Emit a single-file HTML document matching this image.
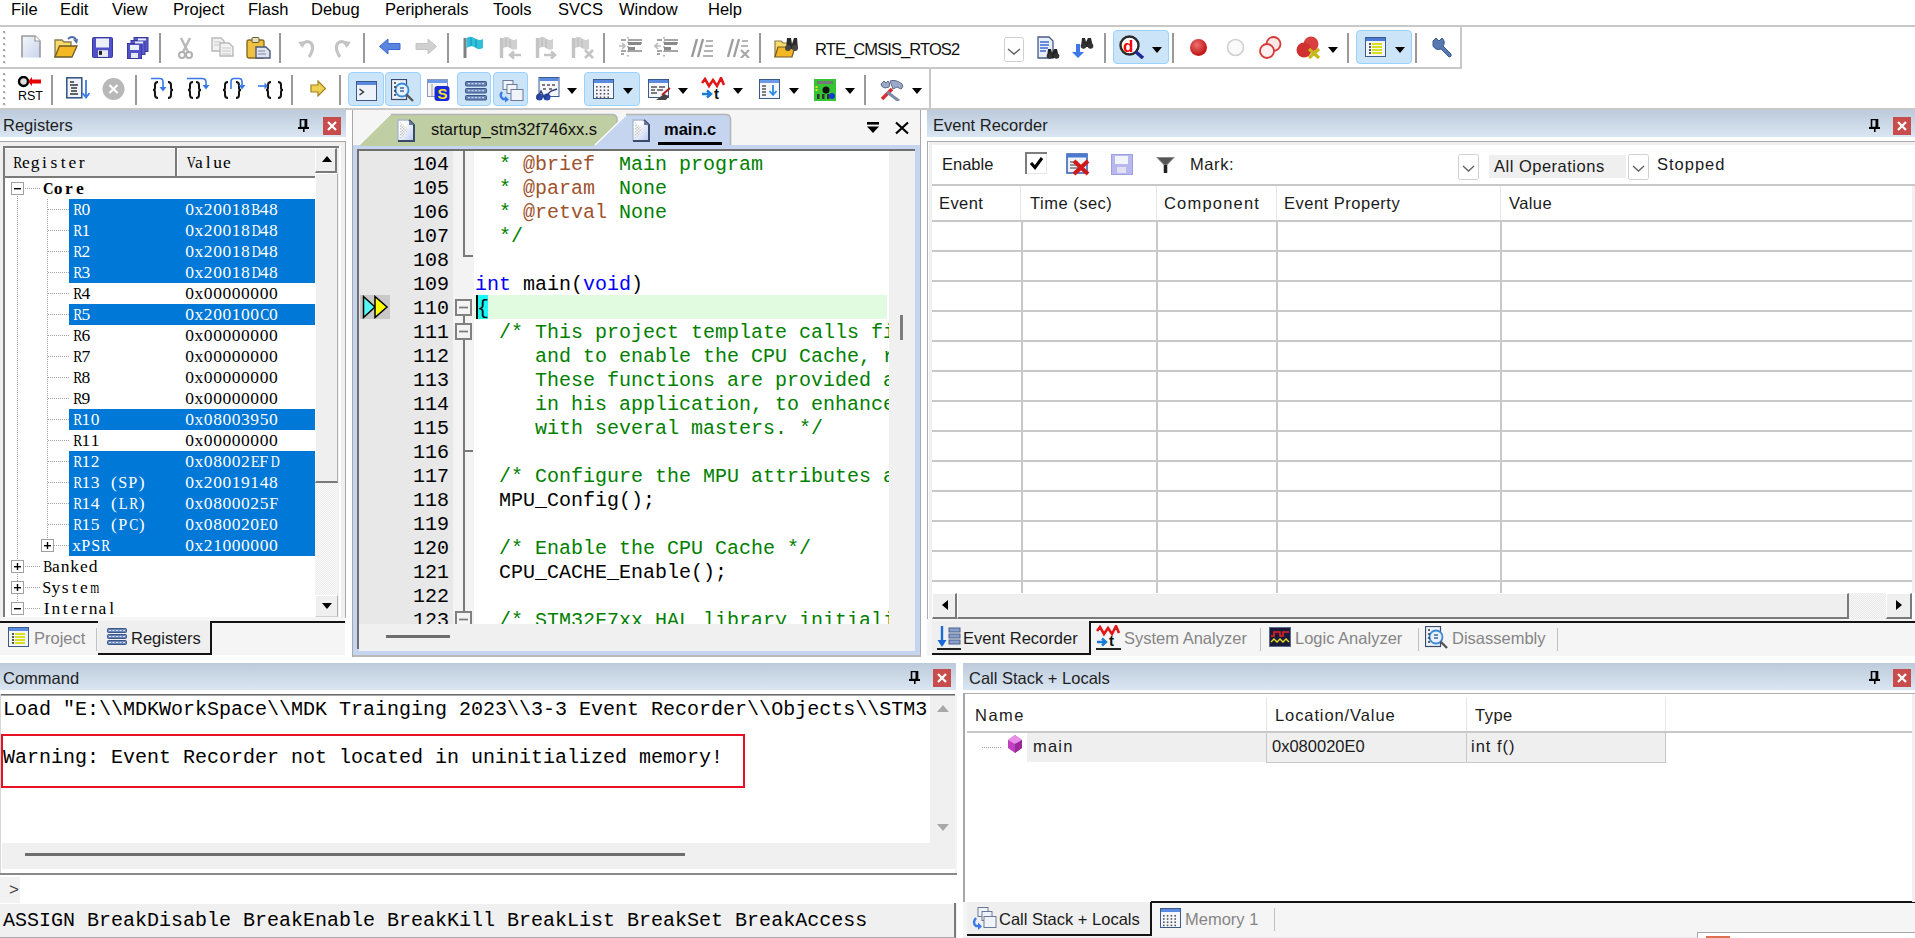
<!DOCTYPE html><html><head><meta charset="utf-8"><style>
*{box-sizing:border-box;margin:0;padding:0}
html,body{width:1915px;height:938px;overflow:hidden;background:#fff;position:relative;font-family:"Liberation Sans",sans-serif;font-size:16px;color:#000}
.a{position:absolute}
.t{position:absolute;white-space:pre;line-height:1}
.m{font-family:"Liberation Mono",monospace}
.hdr{position:absolute;background:linear-gradient(#bccadb,#dae6f2)}
.hdr .t{top:7px;left:3px;font-size:16.5px;color:#1e1e1e}
.cls{position:absolute;width:18px;height:18px;background:#c94c4c}
.cls:before,.cls:after{content:"";position:absolute;left:4px;top:8px;width:10px;height:2.5px;background:#fff;transform:rotate(45deg)}
.cls:after{transform:rotate(-45deg)}
.pin{position:absolute;width:12px;height:16px}
.i{position:absolute;overflow:hidden}
</style></head><body>
<div class="t" style="left:11px;top:1px;font-size:16.5px;color:#000;">File</div>
<div class="t" style="left:60px;top:1px;font-size:16.5px;color:#000;">Edit</div>
<div class="t" style="left:112px;top:1px;font-size:16.5px;color:#000;">View</div>
<div class="t" style="left:173px;top:1px;font-size:16.5px;color:#000;">Project</div>
<div class="t" style="left:248px;top:1px;font-size:16.5px;color:#000;">Flash</div>
<div class="t" style="left:311px;top:1px;font-size:16.5px;color:#000;">Debug</div>
<div class="t" style="left:385px;top:1px;font-size:16.5px;color:#000;">Peripherals</div>
<div class="t" style="left:493px;top:1px;font-size:16.5px;color:#000;">Tools</div>
<div class="t" style="left:558px;top:1px;font-size:16.5px;color:#000;">SVCS</div>
<div class="t" style="left:619px;top:1px;font-size:16.5px;color:#000;">Window</div>
<div class="t" style="left:708px;top:1px;font-size:16.5px;color:#000;">Help</div>
<div class="a" style="left:0px;top:25px;width:1915px;height:2px;background:#c8c8c8;"></div>
<div class="a" style="left:1460px;top:25px;width:2px;height:43px;background:#c8c8c8;"></div>
<div class="a" style="left:0px;top:67px;width:1462px;height:2px;background:#c8c8c8;"></div>
<div class="a" style="left:929px;top:67px;width:2px;height:43px;background:#c8c8c8;"></div>
<div class="a" style="left:0px;top:108px;width:1915px;height:2px;background:#c8c8c8;"></div>
<svg class="i" style="left:3px;top:31px" width="4" height="36" viewBox="0 0 4 36"><rect x="1" y="1" width="2" height="2" fill="#e8e8e8"/><rect x="0" y="0" width="2" height="2" fill="#a8a8a8"/><rect x="1" y="7" width="2" height="2" fill="#e8e8e8"/><rect x="0" y="6" width="2" height="2" fill="#a8a8a8"/><rect x="1" y="13" width="2" height="2" fill="#e8e8e8"/><rect x="0" y="12" width="2" height="2" fill="#a8a8a8"/><rect x="1" y="19" width="2" height="2" fill="#e8e8e8"/><rect x="0" y="18" width="2" height="2" fill="#a8a8a8"/><rect x="1" y="25" width="2" height="2" fill="#e8e8e8"/><rect x="0" y="24" width="2" height="2" fill="#a8a8a8"/><rect x="1" y="31" width="2" height="2" fill="#e8e8e8"/><rect x="0" y="30" width="2" height="2" fill="#a8a8a8"/></svg>
<svg class="i" style="left:3px;top:73px" width="4" height="36" viewBox="0 0 4 36"><rect x="1" y="1" width="2" height="2" fill="#e8e8e8"/><rect x="0" y="0" width="2" height="2" fill="#a8a8a8"/><rect x="1" y="7" width="2" height="2" fill="#e8e8e8"/><rect x="0" y="6" width="2" height="2" fill="#a8a8a8"/><rect x="1" y="13" width="2" height="2" fill="#e8e8e8"/><rect x="0" y="12" width="2" height="2" fill="#a8a8a8"/><rect x="1" y="19" width="2" height="2" fill="#e8e8e8"/><rect x="0" y="18" width="2" height="2" fill="#a8a8a8"/><rect x="1" y="25" width="2" height="2" fill="#e8e8e8"/><rect x="0" y="24" width="2" height="2" fill="#a8a8a8"/><rect x="1" y="31" width="2" height="2" fill="#e8e8e8"/><rect x="0" y="30" width="2" height="2" fill="#a8a8a8"/></svg>
<svg class="i" style="left:21px;top:35px" width="20" height="23" viewBox="0 0 20 23"><defs><linearGradient id="gd" x1="0" y1="0" x2="1" y2="1"><stop offset="0" stop-color="#f4f6fc"/><stop offset="1" stop-color="#c8d4ec"/></linearGradient></defs><path d="M1 22.5 L1 1 L14 1 L19 6 L19 22.5" fill="url(#gd)" stroke="#9a9a9a" stroke-width="1.6"/><path d="M14 1 L14 6 L19 6" fill="#fff" stroke="#9a9a9a" stroke-width="1.2"/></svg>
<svg class="i" style="left:54px;top:36px" width="25" height="22" viewBox="0 0 25 22"><path d="M1 21 L1 4 L8 4 L10 6 L17 6 L17 10" fill="#f7dc6a" stroke="#8a7a50" stroke-width="1.3"/><path d="M1 21 L5.5 10 L23 10 L18 21 Z" fill="#f4b824" stroke="#6e5a2a" stroke-width="1.3"/><path d="M14 3 Q18 -1 22 3" fill="none" stroke="#4a6aa8" stroke-width="1.8"/><path d="M19 3.5 L24 3 L23 8 Z" fill="#4a6aa8"/></svg>
<svg class="i" style="left:92px;top:37px" width="21" height="21" viewBox="0 0 21 21"><rect x="0.5" y="0.5" width="20" height="20" rx="1" fill="#5252c8" stroke="#3a3a9a"/><rect x="4" y="1.5" width="13" height="9.0" fill="#eef0f8"/><rect x="6" y="13.2" width="10" height="6.7" fill="#e8e8f0"/><rect x="7" y="13.9" width="3" height="4" fill="#222"/></svg>
<svg class="i" style="left:127px;top:37px" width="22" height="22" viewBox="0 0 22 22"><rect x="7" y="0.5" width="14" height="14" fill="#5a5ad0" stroke="#3a3a9a"/><rect x="4" y="3.5" width="14" height="14" fill="#5a5ad0" stroke="#3a3a9a"/><rect x="0.5" y="6.5" width="14" height="15" fill="#5252c8" stroke="#3a3a9a"/><rect x="3" y="8" width="9" height="5" fill="#eef0f8"/><rect x="4" y="16" width="7" height="5" fill="#e8e8f0"/><rect x="11" y="1.5" width="8" height="2" fill="#eef0f8"/><rect x="8" y="4.5" width="8" height="2" fill="#eef0f8"/></svg>
<div class="a" style="left:159px;top:33px;width:2px;height:30px;background:#9a9a9a;"></div>
<svg class="i" style="left:178px;top:37px" width="15" height="22" viewBox="0 0 15 22"><path d="M3 1 L10 15 M12 1 L5 15" stroke="#b8b8b8" stroke-width="2.4"/><circle cx="4" cy="18" r="3" fill="none" stroke="#b0b0b0" stroke-width="2"/><circle cx="11" cy="18" r="3" fill="none" stroke="#b0b0b0" stroke-width="2"/></svg>
<svg class="i" style="left:211px;top:37px" width="23" height="20" viewBox="0 0 23 20"><path d="M1 1 L10 1 L13 4 L13 14 L1 14 Z" fill="#f2f2f2" stroke="#b8b8b8" stroke-width="1.4"/><path d="M9 6 L18 6 L22 10 L22 19 L9 19 Z" fill="#f2f2f2" stroke="#b8b8b8" stroke-width="1.4"/><path d="M3 5h7M3 8h7M11 11h9M11 14h9M11 17h9" stroke="#c8c8c8" stroke-width="1"/></svg>
<svg class="i" style="left:246px;top:37px" width="25" height="22" viewBox="0 0 25 22"><rect x="1" y="3" width="17" height="18" rx="2" fill="#f0c040" stroke="#8a6a20" stroke-width="1.4"/><rect x="6" y="0.5" width="7" height="5" rx="1" fill="#e8e0c0" stroke="#6a5a30"/><path d="M10 10 L20 10 L24 14 L24 21 L10 21 Z" fill="#dfe4f0" stroke="#4a5a7a" stroke-width="1.4"/><path d="M12 14h7M12 17h8" stroke="#7a8aa8" stroke-width="1.2"/></svg>
<div class="a" style="left:279px;top:33px;width:2px;height:30px;background:#9a9a9a;"></div>
<svg class="i" style="left:297px;top:37px" width="19" height="22" viewBox="0 0 19 22"><path d="M4 9 Q9 2 14 6 Q18 11 12 20" fill="none" stroke="#c4c4c4" stroke-width="3.2"/><path d="M1 5 L8 4 L6 11 Z" fill="#c4c4c4"/></svg>
<svg class="i" style="left:333px;top:37px" width="19" height="22" viewBox="0 0 19 22"><path d="M15 9 Q10 2 5 6 Q1 11 7 20" fill="none" stroke="#c4c4c4" stroke-width="3.2"/><path d="M18 5 L11 4 L13 11 Z" fill="#c4c4c4"/></svg>
<div class="a" style="left:363px;top:33px;width:2px;height:30px;background:#9a9a9a;"></div>
<svg class="i" style="left:379px;top:38px" width="22" height="17" viewBox="0 0 22 17"><path d="M0.5 8.5 L9 1 L9 5.5 L21 5.5 L21 11.5 L9 11.5 L9 16 Z" fill="#5b86e0" stroke="#3c6ad0" stroke-width="1"/></svg>
<svg class="i" style="left:415px;top:38px" width="22" height="17" viewBox="0 0 22 17"><path d="M21.5 8.5 L13 1 L13 5.5 L1 5.5 L1 11.5 L13 11.5 L13 16 Z" fill="#d0d0d0" stroke="#c4c4c4" stroke-width="1"/></svg>
<div class="a" style="left:447px;top:33px;width:2px;height:30px;background:#9a9a9a;"></div>
<svg class="i" style="left:463px;top:36px" width="21" height="23" viewBox="0 0 21 23"><path d="M2 2 L2 22" stroke="#808080" stroke-width="3"/><path d="M3.5 2 Q8 -0.5 12 2.5 Q16 5 20 3 L20 12 Q16 14.5 12 11.5 Q8 9 3.5 12 Z" fill="#30c0dc"/><path d="M8 1.5 L8 10 M13 3 L13 11.5" stroke="#1a9ab8" stroke-width="1.2"/></svg>
<svg class="i" style="left:499px;top:36px" width="23" height="23" viewBox="0 0 23 23"><path d="M2.5 2 L2.5 22" stroke="#c4c4c4" stroke-width="3.4"/><path d="M4 2 Q8 -0.5 11 2.5 Q14 5 18 3 L18 13 Q14 15 11 12 Q8 9.5 4 12.5 Z" fill="#d0d0d0"/><path d="M7 2 L7 11 M11 3 L11 12" stroke="#bdbdbd" stroke-width="1.2"/><path d="M22 19 L11 19 M15 15.5 L11 19 L15 22.5" fill="none" stroke="#c4c4c4" stroke-width="2.6"/></svg>
<svg class="i" style="left:535px;top:36px" width="23" height="23" viewBox="0 0 23 23"><path d="M2.5 2 L2.5 22" stroke="#c4c4c4" stroke-width="3.4"/><path d="M4 2 Q8 -0.5 11 2.5 Q14 5 18 3 L18 13 Q14 15 11 12 Q8 9.5 4 12.5 Z" fill="#d0d0d0"/><path d="M7 2 L7 11 M11 3 L11 12" stroke="#bdbdbd" stroke-width="1.2"/><path d="M9 19 L20 19 M16 15.5 L20 19 L16 22.5" fill="none" stroke="#c4c4c4" stroke-width="2.6"/></svg>
<svg class="i" style="left:571px;top:36px" width="23" height="23" viewBox="0 0 23 23"><path d="M2.5 2 L2.5 22" stroke="#c4c4c4" stroke-width="3.4"/><path d="M4 2 Q8 -0.5 11 2.5 Q14 5 18 3 L18 13 Q14 15 11 12 Q8 9.5 4 12.5 Z" fill="#d0d0d0"/><path d="M7 2 L7 11 M11 3 L11 12" stroke="#bdbdbd" stroke-width="1.2"/><path d="M14 14 L22 22 M22 14 L14 22" stroke="#c4c4c4" stroke-width="2.6"/></svg>
<div class="a" style="left:603px;top:33px;width:2px;height:30px;background:#9a9a9a;"></div>
<svg class="i" style="left:618px;top:36px" width="25" height="23" viewBox="0 0 25 23"><path d="M3 4h5M3 15h5M3 18h3" stroke="#888" stroke-width="1.6"/><path d="M10 4h14M10 7h14M10 15h14" stroke="#888" stroke-width="1.6"/><rect x="10" y="6" width="13" height="3" fill="#888"/><rect x="10" y="11" width="7" height="3" fill="#888"/><path d="M10 1 L10 22" stroke="#888" stroke-width="1.2" stroke-dasharray="1.5 3"/><path d="M1 10 L6 10 M4 7 L7 10 L4 13" fill="none" stroke="#bbb" stroke-width="1.6"/></svg>
<svg class="i" style="left:654px;top:36px" width="25" height="23" viewBox="0 0 25 23"><path d="M3 4h5M3 15h5M3 18h3" stroke="#888" stroke-width="1.6"/><path d="M10 4h14M10 7h14M10 15h14" stroke="#888" stroke-width="1.6"/><rect x="10" y="6" width="13" height="3" fill="#888"/><rect x="10" y="11" width="7" height="3" fill="#888"/><path d="M10 1 L10 22" stroke="#888" stroke-width="1.2" stroke-dasharray="1.5 3"/><path d="M7 10 L2 10 M4 7 L1 10 L4 13" fill="none" stroke="#bbb" stroke-width="1.6"/></svg>
<svg class="i" style="left:691px;top:38px" width="23" height="20" viewBox="0 0 23 20"><path d="M6 1 L1 19 M12 1 L7 19" stroke="#9a9a9a" stroke-width="2.4"/><path d="M15 3h7M14 8h8M13 13h9M12 18h10" stroke="#9a9a9a" stroke-width="1.6"/></svg>
<svg class="i" style="left:727px;top:38px" width="24" height="20" viewBox="0 0 24 20"><path d="M6 1 L1 19 M12 1 L7 19" stroke="#a0a0a0" stroke-width="2.4"/><path d="M15 3h6M14 8h7" stroke="#a0a0a0" stroke-width="1.6"/><path d="M14 12 L22 20 M22 12 L14 20" stroke="#a8a8a8" stroke-width="2.2"/></svg>
<div class="a" style="left:759px;top:33px;width:2px;height:30px;background:#9a9a9a;"></div>
<svg class="i" style="left:774px;top:36px" width="25" height="22" viewBox="0 0 25 22"><path d="M1 21 L1 5 L7 5 L9 7 L15 7" fill="#f7dc6a" stroke="#8a7a50" stroke-width="1.2"/><path d="M1 21 L4 11 L21 11 L18 21 Z" fill="#f4b824" stroke="#6e5a2a" stroke-width="1.2"/><path d="M12 13 L13 2 L17 2 L18 8 L20 2 L23 2 L24 13 Z" fill="#2a2a2a"/><circle cx="14" cy="12" r="3" fill="#444"/><circle cx="21" cy="12" r="3" fill="#444"/></svg>
<div class="t" style="left:815px;top:41px;font-size:16.5px;color:#101010;letter-spacing:-0.9px">RTE_CMSIS_RTOS2</div>
<svg class="i" style="left:1004px;top:37px" width="20" height="26" viewBox="0 0 20 26"><rect x="0.5" y="0.5" width="19" height="24" rx="2" fill="#fff" stroke="#cfcfcf"/><path d="M4 12 L10 17 L16 12" fill="none" stroke="#606060" stroke-width="1.4"/></svg>
<svg class="i" style="left:1037px;top:36px" width="23" height="23" viewBox="0 0 23 23"><path d="M1 1 L12 1 L16 5 L16 22 L1 22 Z" fill="#e8eefa" stroke="#4a5a88" stroke-width="1.3"/><path d="M3 6h9M3 9h9M3 12h8M3 15h6" stroke="#3a6ad8" stroke-width="1.5"/><path d="M10 22 L11 13 L14 13 L15 17 L17 13 L20 13 L22 22 Z" fill="#222"/><circle cx="12.5" cy="20" r="2.8" fill="#333"/><circle cx="19.5" cy="20" r="2.8" fill="#333"/></svg>
<svg class="i" style="left:1071px;top:36px" width="24" height="22" viewBox="0 0 24 22"><path d="M5 8 L9 8 L9 16 L13 16 L7 22 L1 16 L5 16 Z" fill="#3a7ae8"/><path d="M10 11 L11 2 L14 2 L15 6 L17 2 L20 2 L22 11 Z" fill="#2a2a2a"/><circle cx="12.5" cy="10" r="2.8" fill="#333"/><circle cx="19.5" cy="10" r="2.8" fill="#333"/></svg>
<div class="a" style="left:1104px;top:33px;width:2px;height:30px;background:#9a9a9a;"></div>
<div class="a" style="left:1113px;top:30px;width:56px;height:34px;background:#cce4f7;border:1px solid #99d1ff;border-radius:4px"></div>
<svg class="i" style="left:1119px;top:35px" width="26" height="24" viewBox="0 0 26 24"><circle cx="10.5" cy="10.5" r="9" fill="#fff" stroke="#2a2a2a" stroke-width="2.4"/><path d="M17 17 L24 23" stroke="#1a2a9a" stroke-width="3.6"/><text x="4" y="16.5" font-family="Liberation Sans" font-weight="bold" font-size="17" fill="#ff0000">d</text></svg>
<svg class="i" style="left:1152px;top:47px" width="10" height="6" viewBox="0 0 10 6"><path d="M0 0 L10 0 L5 6 Z" fill="#000"/></svg>
<div class="a" style="left:1172px;top:33px;width:2px;height:30px;background:#9a9a9a;"></div>
<svg class="i" style="left:1189px;top:38px" width="19" height="19" viewBox="0 0 19 19"><defs><radialGradient id="rg" cx="0.4" cy="0.35" r="0.6"><stop offset="0" stop-color="#f07070"/><stop offset="1" stop-color="#c01818"/></radialGradient></defs><circle cx="9.5" cy="9.5" r="8.5" fill="url(#rg)"/></svg>
<svg class="i" style="left:1226px;top:38px" width="19" height="19" viewBox="0 0 19 19"><circle cx="9.5" cy="9.5" r="8" fill="#fafafa" stroke="#d0d0d0" stroke-width="1.6"/></svg>
<svg class="i" style="left:1258px;top:36px" width="25" height="23" viewBox="0 0 25 23"><circle cx="15.5" cy="8" r="7" fill="#fde8e8" stroke="#d83a3a" stroke-width="1.8"/><circle cx="9" cy="15" r="7" fill="#fdf0f0" stroke="#d83a3a" stroke-width="1.8"/></svg>
<svg class="i" style="left:1296px;top:36px" width="25" height="23" viewBox="0 0 25 23"><circle cx="15" cy="8" r="7.5" fill="#d84040"/><circle cx="8" cy="14" r="7.5" fill="#d03030"/><path d="M13 13 L23 22 M23 13 L13 22" stroke="#c8b818" stroke-width="3.2"/></svg>
<svg class="i" style="left:1328px;top:47px" width="10" height="6" viewBox="0 0 10 6"><path d="M0 0 L10 0 L5 6 Z" fill="#000"/></svg>
<div class="a" style="left:1347px;top:33px;width:2px;height:30px;background:#9a9a9a;"></div>
<div class="a" style="left:1356px;top:30px;width:56px;height:34px;background:#cce4f7;border:1px solid #99d1ff;border-radius:4px"></div>
<svg class="i" style="left:1365px;top:37px" width="22" height="21" viewBox="0 0 22 21"><rect x="0.5" y="0.5" width="20" height="19" fill="#f4f4f4" stroke="#3a5a8a"/><rect x="1" y="1" width="19" height="3" fill="#4a7ad8"/><path d="M4 7h2M4 10h2M4 13h2M4 16h2" stroke="#555" stroke-width="2"/><path d="M7 7h10M7 10h10M7 13h10M7 16h10" stroke="#d8e020" stroke-width="2"/></svg>
<svg class="i" style="left:1395px;top:47px" width="10" height="6" viewBox="0 0 10 6"><path d="M0 0 L10 0 L5 6 Z" fill="#000"/></svg>
<div class="a" style="left:1415px;top:33px;width:2px;height:30px;background:#9a9a9a;"></div>
<svg class="i" style="left:1430px;top:36px" width="23" height="23" viewBox="0 0 23 23"><path d="M3 5 L6 2 L9 5 L12 2 Q16 6 13 10 L21 18 Q22 21 19 21 L11 13 Q6 15 3 10 Z" fill="#5a78b0" stroke="#3a5a90" stroke-width="1"/></svg>
<svg class="i" style="left:17px;top:76px" width="26" height="25" viewBox="0 0 26 25"><circle cx="6.5" cy="5.5" r="4.5" fill="#ddd" stroke="#000" stroke-width="2.4"/><path d="M11 5.5 L15 1 L15 3.5 L24 3.5 L24 7.5 L15 7.5 L15 10 Z" fill="#e80000"/><text x="1" y="24" font-family="Liberation Sans" font-size="12.5" fill="#000">RST</text></svg>
<div class="a" style="left:51px;top:75px;width:2px;height:30px;background:#9a9a9a;"></div>
<svg class="i" style="left:66px;top:77px" width="24" height="23" viewBox="0 0 24 23"><rect x="0.8" y="0.8" width="15" height="20" fill="#f0f4fa" stroke="#3a5a88" stroke-width="1.6"/><path d="M4 5h4M4 8h8M5 11h6M5 14h6M4 17h8" stroke="#333" stroke-width="1.3"/><path d="M20 3 L20 20 M16.5 16 L20 20.5 L23.5 16" fill="none" stroke="#3a7ae8" stroke-width="1.8"/></svg>
<svg class="i" style="left:102px;top:78px" width="23" height="23" viewBox="0 0 23 23"><circle cx="11.5" cy="11" r="11" fill="#b8b8b8"/><path d="M7.5 7 L15.5 15 M15.5 7 L7.5 15" stroke="#fff" stroke-width="2.2"/></svg>
<div class="a" style="left:135px;top:75px;width:2px;height:30px;background:#9a9a9a;"></div>
<svg class="i" style="left:151px;top:77px" width="24" height="24" viewBox="0 0 24 24"><path d="M7 5 Q4 5 4 8 L4 11.0 Q4 13.0 2 13.0 Q4 13.0 4 15.0 L4 18 Q4 21 7 21" fill="none" stroke="#111" stroke-width="2"/><path d="M17 5 Q20 5 20 8 L20 11.0 Q20 13.0 22 13.0 Q20 13.0 20 15.0 L20 18 Q20 21 17 21" fill="none" stroke="#111" stroke-width="2"/><path d="M0 1.5 L9 1.5 Q12 1.5 12 5 L12 12" fill="none" stroke="#3a7ae8" stroke-width="1.6"/><path d="M8.5 10 L12 14.5 L15.5 10 Z" fill="#3a7ae8"/></svg>
<svg class="i" style="left:187px;top:77px" width="25" height="24" viewBox="0 0 25 24"><path d="M6 5 Q3 5 3 8 L3 11.0 Q3 13.0 1 13.0 Q3 13.0 3 15.0 L3 18 Q3 21 6 21" fill="none" stroke="#111" stroke-width="2"/><path d="M9 5 Q12 5 12 8 L12 11.0 Q12 13.0 14 13.0 Q12 13.0 12 15.0 L12 18 Q12 21 9 21" fill="none" stroke="#111" stroke-width="2"/><path d="M0 1.5 L15 1.5 Q19 1.5 19 5 L19 9" fill="none" stroke="#3a7ae8" stroke-width="1.6"/><path d="M15.5 8 L19 12.5 L22.5 8 Z" fill="#3a7ae8"/></svg>
<svg class="i" style="left:222px;top:77px" width="24" height="24" viewBox="0 0 24 24"><path d="M6 5 Q3 5 3 8 L3 11.0 Q3 13.0 1 13.0 Q3 13.0 3 15.0 L3 18 Q3 21 6 21" fill="none" stroke="#111" stroke-width="2"/><path d="M14 5 Q17 5 17 8 L17 11.0 Q17 13.0 19 13.0 Q17 13.0 17 15.0 L17 18 Q17 21 14 21" fill="none" stroke="#111" stroke-width="2"/><path d="M9 12 L9 5 Q9 1.5 12 1.5 L17 1.5 Q20 1.5 20 5 L20 9" fill="none" stroke="#3a7ae8" stroke-width="1.6"/><path d="M16.5 8 L20 12.5 L23.5 8 Z" fill="#3a7ae8"/></svg>
<svg class="i" style="left:258px;top:77px" width="27" height="24" viewBox="0 0 27 24"><path d="M13 5 Q10 5 10 8 L10 11.0 Q10 13.0 8 13.0 Q10 13.0 10 15.0 L10 18 Q10 21 13 21" fill="none" stroke="#111" stroke-width="2"/><path d="M20 5 Q23 5 23 8 L23 11.0 Q23 13.0 25 13.0 Q23 13.0 23 15.0 L23 18 Q23 21 20 21" fill="none" stroke="#111" stroke-width="2"/><path d="M0 9 L9 9" stroke="#3a7ae8" stroke-width="1.6"/><path d="M6.5 5.5 L10 9 L6.5 12.5 Z" fill="#3a7ae8"/></svg>
<div class="a" style="left:291px;top:75px;width:2px;height:30px;background:#9a9a9a;"></div>
<svg class="i" style="left:310px;top:80px" width="16" height="17" viewBox="0 0 16 17"><path d="M1 5 L8 5 L8 1 L15.5 8.5 L8 16 L8 12 L1 12 Z" fill="#f0d050" stroke="#a08020" stroke-width="1.2"/></svg>
<div class="a" style="left:339px;top:75px;width:2px;height:30px;background:#9a9a9a;"></div>
<div class="a" style="left:348px;top:72px;width:36px;height:34px;background:#cce4f7;border:1px solid #99d1ff;border-radius:4px"></div>
<div class="a" style="left:385px;top:72px;width:36px;height:34px;background:#cce4f7;border:1px solid #99d1ff;border-radius:4px"></div>
<svg class="i" style="left:356px;top:81px" width="21" height="20" viewBox="0 0 21 20"><rect x="0.5" y="0.5" width="20" height="19" fill="#eef2fa" stroke="#3a5a8a"/><rect x="1" y="1" width="19" height="3" fill="#5a8ae0"/><path d="M3.5 8 L7.5 11 L3.5 14" fill="none" stroke="#333" stroke-width="1.4"/></svg>
<svg class="i" style="left:391px;top:79px" width="25" height="24" viewBox="0 0 25 24"><rect x="0.5" y="0.5" width="15" height="20" fill="#eef2fa" stroke="#3a4a6a" stroke-width="1.2"/><circle cx="11" cy="11" r="6.5" fill="#e8f0fa" stroke="#3a8ad8" stroke-width="1.8"/><path d="M3 4h2M3 8h2M3 12h2M3 16h2" stroke="#333" stroke-width="1.6"/><path d="M9 9h4M9 12h4" stroke="#3a6aa8" stroke-width="1.4"/><path d="M15.5 15.5 L22 22" stroke="#555" stroke-width="2.4"/></svg>
<svg class="i" style="left:427px;top:79px" width="23" height="23" viewBox="0 0 23 23"><rect x="0.5" y="0.5" width="20" height="17" fill="#f4f4f4" stroke="#8a9ab8"/><rect x="1" y="1" width="19" height="3" fill="#6a9ae8"/><path d="M5 5 L5 17" stroke="#aaa" stroke-width="1.2"/><rect x="7.5" y="7" width="15" height="15" rx="3" fill="#1a2ad8"/><text x="10.5" y="20" font-family="Liberation Sans" font-weight="bold" font-size="15" fill="#f0e030">S</text></svg>
<div class="a" style="left:457px;top:72px;width:34px;height:34px;background:#cce4f7;border:1px solid #99d1ff;border-radius:4px"></div>
<div class="a" style="left:493px;top:72px;width:35px;height:34px;background:#cce4f7;border:1px solid #99d1ff;border-radius:4px"></div>
<svg class="i" style="left:465px;top:81px" width="22" height="20" viewBox="0 0 22 20"><rect x="0.5" y="0.5" width="21" height="4.5" rx="1" fill="#6a86b8" stroke="#3a5688"/><rect x="0.5" y="7.5" width="21" height="4.5" rx="1" fill="#6a86b8" stroke="#3a5688"/><rect x="0.5" y="14.5" width="21" height="4.5" rx="1" fill="#6a86b8" stroke="#3a5688"/><path d="M3 2.7h16M3 9.7h16M3 16.7h16" stroke="#d8e4f4" stroke-width="1" stroke-dasharray="2 1.5"/></svg>
<svg class="i" style="left:499px;top:80px" width="25" height="23" viewBox="0 0 25 23"><rect x="4" y="0.5" width="10" height="9" fill="#f0f4fa" stroke="#6a7a98"/><rect x="8" y="4.5" width="10" height="9" fill="#f0f4fa" stroke="#6a7a98"/><rect x="12" y="9.5" width="12" height="11" fill="#f0f4fa" stroke="#6a7a98"/><path d="M3 12 Q0 16 4 19 L8 19" fill="none" stroke="#3a7ae8" stroke-width="2.4"/><path d="M6 16 L10 19.5 L6 22.5 Z" fill="#3a7ae8"/></svg>
<svg class="i" style="left:535px;top:77px" width="26" height="24" viewBox="0 0 26 24"><rect x="4" y="0.5" width="20" height="19" fill="#f4f6fa" stroke="#3a5a8a"/><rect x="4.5" y="1" width="19" height="3" fill="#5a8ae0"/><path d="M7 8h3M12 8h3M17 8h3M8 12h3M14 12h3" stroke="#555" stroke-width="1.4"/><circle cx="4.5" cy="20" r="3.5" fill="#2a4ab0"/><circle cx="12" cy="20" r="3.5" fill="#2a4ab0"/><path d="M2 22 L6 14 L10 22 M10 20 L16 14 L22 12" fill="none" stroke="#2a3a7a" stroke-width="1.4"/></svg>
<svg class="i" style="left:567px;top:88px" width="10" height="6" viewBox="0 0 10 6"><path d="M0 0 L10 0 L5 6 Z" fill="#000"/></svg>
<div class="a" style="left:584px;top:72px;width:56px;height:34px;background:#cce4f7;border:1px solid #99d1ff;border-radius:4px"></div>
<svg class="i" style="left:593px;top:79px" width="21" height="21" viewBox="0 0 21 21"><rect x="0.5" y="0.5" width="20" height="19" fill="#f4f6fa" stroke="#3a5a8a"/><rect x="1" y="1" width="19" height="3" fill="#5a8ae0"/><rect x="3.0" y="7.0" width="1.6" height="1.6" fill="#555"/><rect x="3.0" y="10.5" width="1.6" height="1.6" fill="#555"/><rect x="3.0" y="14.0" width="1.6" height="1.6" fill="#555"/><rect x="3.0" y="17.5" width="1.6" height="1.6" fill="#555"/><rect x="6.8" y="7.0" width="1.6" height="1.6" fill="#555"/><rect x="6.8" y="10.5" width="1.6" height="1.6" fill="#555"/><rect x="6.8" y="14.0" width="1.6" height="1.6" fill="#555"/><rect x="6.8" y="17.5" width="1.6" height="1.6" fill="#555"/><rect x="10.6" y="7.0" width="1.6" height="1.6" fill="#555"/><rect x="10.6" y="10.5" width="1.6" height="1.6" fill="#555"/><rect x="10.6" y="14.0" width="1.6" height="1.6" fill="#555"/><rect x="10.6" y="17.5" width="1.6" height="1.6" fill="#555"/><rect x="14.4" y="7.0" width="1.6" height="1.6" fill="#555"/><rect x="14.4" y="10.5" width="1.6" height="1.6" fill="#555"/><rect x="14.4" y="14.0" width="1.6" height="1.6" fill="#555"/><rect x="14.4" y="17.5" width="1.6" height="1.6" fill="#555"/></svg>
<svg class="i" style="left:623px;top:88px" width="10" height="6" viewBox="0 0 10 6"><path d="M0 0 L10 0 L5 6 Z" fill="#000"/></svg>
<svg class="i" style="left:648px;top:79px" width="24" height="22" viewBox="0 0 24 22"><rect x="0.5" y="0.5" width="20" height="18" fill="#f4f6fa" stroke="#3a5a8a"/><rect x="1" y="1" width="19" height="3" fill="#5a8ae0"/><path d="M3 8h6M11 8h6M3 11h4M9 11h6M3 14h6" stroke="#555" stroke-width="1.5"/><path d="M8 21 L16 15 L21 17 L18 21 Z" fill="#444"/><path d="M14 16 L22 9" stroke="#b02020" stroke-width="2"/></svg>
<svg class="i" style="left:678px;top:88px" width="10" height="6" viewBox="0 0 10 6"><path d="M0 0 L10 0 L5 6 Z" fill="#000"/></svg>
<svg class="i" style="left:701px;top:77px" width="24" height="24" viewBox="0 0 24 24"><path d="M1 6 L4 2 L8 9 L12 3 L16 9 L20 1 L23 8" fill="none" stroke="#e01818" stroke-width="2.6"/><path d="M1 17 L9 17 M6 13.5 L10 17 L6 20.5" fill="none" stroke="#1a7ad8" stroke-width="2.4"/><text x="13" y="22" font-family="Liberation Sans" font-weight="bold" font-size="15" fill="#111">t</text></svg>
<svg class="i" style="left:733px;top:88px" width="10" height="6" viewBox="0 0 10 6"><path d="M0 0 L10 0 L5 6 Z" fill="#000"/></svg>
<svg class="i" style="left:759px;top:79px" width="22" height="21" viewBox="0 0 22 21"><rect x="0.5" y="0.5" width="20" height="19" fill="#f4f6fa" stroke="#3a5a8a"/><rect x="1" y="1" width="19" height="3" fill="#6a9ae8"/><path d="M3 7h4M3 10h4M3 13h4M3 16h4" stroke="#555" stroke-width="1.4"/><path d="M14 6 L14 15 M10.5 12 L14 16 L17.5 12" fill="none" stroke="#2a8ae8" stroke-width="1.8"/></svg>
<svg class="i" style="left:789px;top:88px" width="10" height="6" viewBox="0 0 10 6"><path d="M0 0 L10 0 L5 6 Z" fill="#000"/></svg>
<svg class="i" style="left:814px;top:79px" width="22" height="22" viewBox="0 0 22 22"><rect x="0" y="0" width="22" height="22" fill="#34c434"/><rect x="3" y="2" width="16" height="3" fill="#777"/><circle cx="12" cy="11" r="3.5" fill="#111"/><rect x="3" y="15" width="2.5" height="5" fill="#333"/><rect x="8" y="15" width="2.5" height="5" fill="#333"/><rect x="13" y="15" width="2.5" height="5" fill="#333"/><circle cx="18" cy="17" r="3" fill="#1a3ad8"/><rect x="1.5" y="7" width="2" height="2" fill="#e8e020"/><rect x="1.5" y="10" width="2" height="2" fill="#e8e020"/></svg>
<svg class="i" style="left:845px;top:88px" width="10" height="6" viewBox="0 0 10 6"><path d="M0 0 L10 0 L5 6 Z" fill="#000"/></svg>
<div class="a" style="left:864px;top:75px;width:2px;height:30px;background:#9a9a9a;"></div>
<svg class="i" style="left:880px;top:79px" width="25" height="22" viewBox="0 0 25 22"><path d="M2 20 L12 10" stroke="#d83030" stroke-width="3.6"/><path d="M7 13 L19 22" stroke="#7a8aa8" stroke-width="3"/><path d="M10 2 Q16 0 22 5 Q24 8 21 10 L17 8 L13 10 Z" fill="#9aaac8" stroke="#5a6a88"/><path d="M1 5 L4 2 L6 4 L8 2 Q11 5 9 8 L5 9 Q1 8 1 5 Z" fill="#9aaac8" stroke="#5a6a88"/></svg>
<svg class="i" style="left:912px;top:88px" width="10" height="6" viewBox="0 0 10 6"><path d="M0 0 L10 0 L5 6 Z" fill="#000"/></svg>
<div class="hdr" style="left:0;top:110px;width:346px;height:27px"><div class="t">Registers</div></div>
<svg class="i" style="left:298px;top:119px" width="11" height="13" viewBox="0 0 11 13"><path d="M2.5 0.5 L8.5 0.5 L8.5 8.5 L2.5 8.5 Z" fill="none" stroke="#000" stroke-width="1.6"/><rect x="6.5" y="0.5" width="2.5" height="8.5" fill="#000"/><rect x="0" y="8" width="11" height="2" fill="#000"/><rect x="5" y="10" width="1.6" height="3" fill="#000"/></svg>
<svg class="i" style="left:323px;top:117px" width="18" height="18" viewBox="0 0 18 18"><rect width="18" height="18" fill="#c94c4c"/><path d="M5 5 L13 13 M13 5 L5 13" stroke="#fff" stroke-width="2.2"/></svg>
<div class="a" style="left:0px;top:141px;width:346px;height:1px;background:#a9a9a9;"></div>
<div class="a" style="left:0px;top:142px;width:345px;height:476px;background:#f0f0f0;"></div>
<div class="a" style="left:345px;top:141px;width:1px;height:477px;background:#a9a9a9;"></div>
<div class="a" style="left:3px;top:146px;width:336px;height:2px;background:#7a7a7a;"></div>
<div class="a" style="left:3px;top:146px;width:2px;height:471px;background:#7a7a7a;"></div>
<div class="a" style="left:339px;top:146px;width:2px;height:471px;background:#ffffff;"></div>
<div class="a" style="left:5px;top:148px;width:310px;height:469px;background:#ffffff;"></div>
<div class="a" style="left:5px;top:148px;width:310px;height:28px;background:#efefef;"></div>
<div class="a" style="left:5px;top:148px;width:310px;height:1px;background:#ffffff;"></div>
<div class="a" style="left:5px;top:176px;width:310px;height:2px;background:#7a7a7a;"></div>
<div class="a" style="left:175px;top:148px;width:2px;height:28px;background:#7a7a7a;"></div>
<div class="a" style="left:177px;top:148px;width:1px;height:28px;background:#ffffff;"></div>
<div class="t" style="left:12px;top:154px;font-family:'Liberation Serif',serif;font-size:17.5px;color:#000;"><span style="display:inline-block;width:9.3px;text-align:center"><span style="display:inline-block;transform:scaleX(0.771)">R</span></span><span style="display:inline-block;width:9.3px;text-align:center">e</span><span style="display:inline-block;width:9.3px;text-align:center">g</span><span style="display:inline-block;width:9.3px;text-align:center">i</span><span style="display:inline-block;width:9.3px;text-align:center">s</span><span style="display:inline-block;width:9.3px;text-align:center">t</span><span style="display:inline-block;width:9.3px;text-align:center">e</span><span style="display:inline-block;width:9.3px;text-align:center">r</span></div>
<div class="t" style="left:185px;top:154px;font-family:'Liberation Serif',serif;font-size:17.5px;color:#000;"><span style="display:inline-block;width:9.3px;text-align:center"><span style="display:inline-block;transform:scaleX(0.712)">V</span></span><span style="display:inline-block;width:9.3px;text-align:center">a</span><span style="display:inline-block;width:9.3px;text-align:center">l</span><span style="display:inline-block;width:9.3px;text-align:center">u</span><span style="display:inline-block;width:9.3px;text-align:center">e</span></div>
<div class="a" style="left:315px;top:148px;width:24px;height:469px;background:#f0f0f0;"></div>
<div class="a" style="left:315px;top:148px;width:22px;height:25px;background:#efefef;border-top:1px solid #fff;border-left:1px solid #fff;border-right:2px solid #7a7a7a;border-bottom:2px solid #7a7a7a"></div>
<svg class="i" style="left:320px;top:153px" width="14" height="12" viewBox="0 0 14 12"><path d="M2 9 L7 3 L12 9 Z" fill="#000"/></svg>
<div class="a" style="left:315px;top:173px;width:23px;height:310px;background:#efefef;border-top:1px solid #fff;border-left:1px solid #fff;border-right:1px solid #b0b0b0;border-bottom:2px solid #7a7a7a"></div>
<div class="a" style="left:315px;top:483px;width:23px;height:112px;background:repeating-conic-gradient(#ececec 0 25%,#fafafa 0 50%) 0 0/2px 2px;"></div>
<div class="a" style="left:315px;top:595px;width:23px;height:22px;background:#efefef;border-top:1px solid #fff;border-left:1px solid #fff;border-right:1px solid #b0b0b0;border-bottom:1px solid #d0d0d0"></div>
<svg class="i" style="left:320px;top:600px" width="14" height="12" viewBox="0 0 14 12"><path d="M2 3 L7 9 L12 3 Z" fill="#000"/></svg>
<div class="a" style="left:25px;top:188px;width:16px;height:1px;background:repeating-linear-gradient(90deg,#a0a0a0 0 1px,transparent 1px 2px);"></div>
<div class="t" style="left:42px;top:180px;font-family:'Liberation Serif',serif;font-size:17.5px;color:#000;font-weight:bold;"><span style="display:inline-block;width:10.8px;text-align:center"><span style="display:inline-block;transform:scaleX(0.831)">C</span></span><span style="display:inline-block;width:10.8px;text-align:center">o</span><span style="display:inline-block;width:10.8px;text-align:center">r</span><span style="display:inline-block;width:10.8px;text-align:center">e</span></div>
<div class="a" style="left:69px;top:199px;width:246px;height:21px;background:#0078d7;"></div>
<div class="a" style="left:48px;top:209px;width:21px;height:1px;background:repeating-linear-gradient(90deg,#a0a0a0 0 1px,transparent 1px 2px);"></div>
<div class="t" style="left:72px;top:201px;font-family:'Liberation Serif',serif;font-size:17.5px;color:#fff;"><span style="display:inline-block;width:9.3px;text-align:center"><span style="display:inline-block;transform:scaleX(0.771)">R</span></span><span style="display:inline-block;width:9.3px;text-align:center">0</span></div>
<div class="t" style="left:185px;top:201px;font-family:'Liberation Serif',serif;font-size:17.5px;color:#fff;"><span style="display:inline-block;width:9.3px;text-align:center">0</span><span style="display:inline-block;width:9.3px;text-align:center">x</span><span style="display:inline-block;width:9.3px;text-align:center">2</span><span style="display:inline-block;width:9.3px;text-align:center">0</span><span style="display:inline-block;width:9.3px;text-align:center">0</span><span style="display:inline-block;width:9.3px;text-align:center">1</span><span style="display:inline-block;width:9.3px;text-align:center">8</span><span style="display:inline-block;width:9.3px;text-align:center"><span style="display:inline-block;transform:scaleX(0.771)">B</span></span><span style="display:inline-block;width:9.3px;text-align:center">4</span><span style="display:inline-block;width:9.3px;text-align:center">8</span></div>
<div class="a" style="left:69px;top:220px;width:246px;height:21px;background:#0078d7;"></div>
<div class="a" style="left:48px;top:230px;width:21px;height:1px;background:repeating-linear-gradient(90deg,#a0a0a0 0 1px,transparent 1px 2px);"></div>
<div class="t" style="left:72px;top:222px;font-family:'Liberation Serif',serif;font-size:17.5px;color:#fff;"><span style="display:inline-block;width:9.3px;text-align:center"><span style="display:inline-block;transform:scaleX(0.771)">R</span></span><span style="display:inline-block;width:9.3px;text-align:center">1</span></div>
<div class="t" style="left:185px;top:222px;font-family:'Liberation Serif',serif;font-size:17.5px;color:#fff;"><span style="display:inline-block;width:9.3px;text-align:center">0</span><span style="display:inline-block;width:9.3px;text-align:center">x</span><span style="display:inline-block;width:9.3px;text-align:center">2</span><span style="display:inline-block;width:9.3px;text-align:center">0</span><span style="display:inline-block;width:9.3px;text-align:center">0</span><span style="display:inline-block;width:9.3px;text-align:center">1</span><span style="display:inline-block;width:9.3px;text-align:center">8</span><span style="display:inline-block;width:9.3px;text-align:center"><span style="display:inline-block;transform:scaleX(0.712)">D</span></span><span style="display:inline-block;width:9.3px;text-align:center">4</span><span style="display:inline-block;width:9.3px;text-align:center">8</span></div>
<div class="a" style="left:69px;top:241px;width:246px;height:21px;background:#0078d7;"></div>
<div class="a" style="left:48px;top:251px;width:21px;height:1px;background:repeating-linear-gradient(90deg,#a0a0a0 0 1px,transparent 1px 2px);"></div>
<div class="t" style="left:72px;top:243px;font-family:'Liberation Serif',serif;font-size:17.5px;color:#fff;"><span style="display:inline-block;width:9.3px;text-align:center"><span style="display:inline-block;transform:scaleX(0.771)">R</span></span><span style="display:inline-block;width:9.3px;text-align:center">2</span></div>
<div class="t" style="left:185px;top:243px;font-family:'Liberation Serif',serif;font-size:17.5px;color:#fff;"><span style="display:inline-block;width:9.3px;text-align:center">0</span><span style="display:inline-block;width:9.3px;text-align:center">x</span><span style="display:inline-block;width:9.3px;text-align:center">2</span><span style="display:inline-block;width:9.3px;text-align:center">0</span><span style="display:inline-block;width:9.3px;text-align:center">0</span><span style="display:inline-block;width:9.3px;text-align:center">1</span><span style="display:inline-block;width:9.3px;text-align:center">8</span><span style="display:inline-block;width:9.3px;text-align:center"><span style="display:inline-block;transform:scaleX(0.712)">D</span></span><span style="display:inline-block;width:9.3px;text-align:center">4</span><span style="display:inline-block;width:9.3px;text-align:center">8</span></div>
<div class="a" style="left:69px;top:262px;width:246px;height:21px;background:#0078d7;"></div>
<div class="a" style="left:48px;top:272px;width:21px;height:1px;background:repeating-linear-gradient(90deg,#a0a0a0 0 1px,transparent 1px 2px);"></div>
<div class="t" style="left:72px;top:264px;font-family:'Liberation Serif',serif;font-size:17.5px;color:#fff;"><span style="display:inline-block;width:9.3px;text-align:center"><span style="display:inline-block;transform:scaleX(0.771)">R</span></span><span style="display:inline-block;width:9.3px;text-align:center">3</span></div>
<div class="t" style="left:185px;top:264px;font-family:'Liberation Serif',serif;font-size:17.5px;color:#fff;"><span style="display:inline-block;width:9.3px;text-align:center">0</span><span style="display:inline-block;width:9.3px;text-align:center">x</span><span style="display:inline-block;width:9.3px;text-align:center">2</span><span style="display:inline-block;width:9.3px;text-align:center">0</span><span style="display:inline-block;width:9.3px;text-align:center">0</span><span style="display:inline-block;width:9.3px;text-align:center">1</span><span style="display:inline-block;width:9.3px;text-align:center">8</span><span style="display:inline-block;width:9.3px;text-align:center"><span style="display:inline-block;transform:scaleX(0.712)">D</span></span><span style="display:inline-block;width:9.3px;text-align:center">4</span><span style="display:inline-block;width:9.3px;text-align:center">8</span></div>
<div class="a" style="left:48px;top:293px;width:21px;height:1px;background:repeating-linear-gradient(90deg,#a0a0a0 0 1px,transparent 1px 2px);"></div>
<div class="t" style="left:72px;top:285px;font-family:'Liberation Serif',serif;font-size:17.5px;color:#000;"><span style="display:inline-block;width:9.3px;text-align:center"><span style="display:inline-block;transform:scaleX(0.771)">R</span></span><span style="display:inline-block;width:9.3px;text-align:center">4</span></div>
<div class="t" style="left:185px;top:285px;font-family:'Liberation Serif',serif;font-size:17.5px;color:#000;"><span style="display:inline-block;width:9.3px;text-align:center">0</span><span style="display:inline-block;width:9.3px;text-align:center">x</span><span style="display:inline-block;width:9.3px;text-align:center">0</span><span style="display:inline-block;width:9.3px;text-align:center">0</span><span style="display:inline-block;width:9.3px;text-align:center">0</span><span style="display:inline-block;width:9.3px;text-align:center">0</span><span style="display:inline-block;width:9.3px;text-align:center">0</span><span style="display:inline-block;width:9.3px;text-align:center">0</span><span style="display:inline-block;width:9.3px;text-align:center">0</span><span style="display:inline-block;width:9.3px;text-align:center">0</span></div>
<div class="a" style="left:69px;top:304px;width:246px;height:21px;background:#0078d7;"></div>
<div class="a" style="left:48px;top:314px;width:21px;height:1px;background:repeating-linear-gradient(90deg,#a0a0a0 0 1px,transparent 1px 2px);"></div>
<div class="t" style="left:72px;top:306px;font-family:'Liberation Serif',serif;font-size:17.5px;color:#fff;"><span style="display:inline-block;width:9.3px;text-align:center"><span style="display:inline-block;transform:scaleX(0.771)">R</span></span><span style="display:inline-block;width:9.3px;text-align:center">5</span></div>
<div class="t" style="left:185px;top:306px;font-family:'Liberation Serif',serif;font-size:17.5px;color:#fff;"><span style="display:inline-block;width:9.3px;text-align:center">0</span><span style="display:inline-block;width:9.3px;text-align:center">x</span><span style="display:inline-block;width:9.3px;text-align:center">2</span><span style="display:inline-block;width:9.3px;text-align:center">0</span><span style="display:inline-block;width:9.3px;text-align:center">0</span><span style="display:inline-block;width:9.3px;text-align:center">1</span><span style="display:inline-block;width:9.3px;text-align:center">0</span><span style="display:inline-block;width:9.3px;text-align:center">0</span><span style="display:inline-block;width:9.3px;text-align:center"><span style="display:inline-block;transform:scaleX(0.771)">C</span></span><span style="display:inline-block;width:9.3px;text-align:center">0</span></div>
<div class="a" style="left:48px;top:335px;width:21px;height:1px;background:repeating-linear-gradient(90deg,#a0a0a0 0 1px,transparent 1px 2px);"></div>
<div class="t" style="left:72px;top:327px;font-family:'Liberation Serif',serif;font-size:17.5px;color:#000;"><span style="display:inline-block;width:9.3px;text-align:center"><span style="display:inline-block;transform:scaleX(0.771)">R</span></span><span style="display:inline-block;width:9.3px;text-align:center">6</span></div>
<div class="t" style="left:185px;top:327px;font-family:'Liberation Serif',serif;font-size:17.5px;color:#000;"><span style="display:inline-block;width:9.3px;text-align:center">0</span><span style="display:inline-block;width:9.3px;text-align:center">x</span><span style="display:inline-block;width:9.3px;text-align:center">0</span><span style="display:inline-block;width:9.3px;text-align:center">0</span><span style="display:inline-block;width:9.3px;text-align:center">0</span><span style="display:inline-block;width:9.3px;text-align:center">0</span><span style="display:inline-block;width:9.3px;text-align:center">0</span><span style="display:inline-block;width:9.3px;text-align:center">0</span><span style="display:inline-block;width:9.3px;text-align:center">0</span><span style="display:inline-block;width:9.3px;text-align:center">0</span></div>
<div class="a" style="left:48px;top:356px;width:21px;height:1px;background:repeating-linear-gradient(90deg,#a0a0a0 0 1px,transparent 1px 2px);"></div>
<div class="t" style="left:72px;top:348px;font-family:'Liberation Serif',serif;font-size:17.5px;color:#000;"><span style="display:inline-block;width:9.3px;text-align:center"><span style="display:inline-block;transform:scaleX(0.771)">R</span></span><span style="display:inline-block;width:9.3px;text-align:center">7</span></div>
<div class="t" style="left:185px;top:348px;font-family:'Liberation Serif',serif;font-size:17.5px;color:#000;"><span style="display:inline-block;width:9.3px;text-align:center">0</span><span style="display:inline-block;width:9.3px;text-align:center">x</span><span style="display:inline-block;width:9.3px;text-align:center">0</span><span style="display:inline-block;width:9.3px;text-align:center">0</span><span style="display:inline-block;width:9.3px;text-align:center">0</span><span style="display:inline-block;width:9.3px;text-align:center">0</span><span style="display:inline-block;width:9.3px;text-align:center">0</span><span style="display:inline-block;width:9.3px;text-align:center">0</span><span style="display:inline-block;width:9.3px;text-align:center">0</span><span style="display:inline-block;width:9.3px;text-align:center">0</span></div>
<div class="a" style="left:48px;top:377px;width:21px;height:1px;background:repeating-linear-gradient(90deg,#a0a0a0 0 1px,transparent 1px 2px);"></div>
<div class="t" style="left:72px;top:369px;font-family:'Liberation Serif',serif;font-size:17.5px;color:#000;"><span style="display:inline-block;width:9.3px;text-align:center"><span style="display:inline-block;transform:scaleX(0.771)">R</span></span><span style="display:inline-block;width:9.3px;text-align:center">8</span></div>
<div class="t" style="left:185px;top:369px;font-family:'Liberation Serif',serif;font-size:17.5px;color:#000;"><span style="display:inline-block;width:9.3px;text-align:center">0</span><span style="display:inline-block;width:9.3px;text-align:center">x</span><span style="display:inline-block;width:9.3px;text-align:center">0</span><span style="display:inline-block;width:9.3px;text-align:center">0</span><span style="display:inline-block;width:9.3px;text-align:center">0</span><span style="display:inline-block;width:9.3px;text-align:center">0</span><span style="display:inline-block;width:9.3px;text-align:center">0</span><span style="display:inline-block;width:9.3px;text-align:center">0</span><span style="display:inline-block;width:9.3px;text-align:center">0</span><span style="display:inline-block;width:9.3px;text-align:center">0</span></div>
<div class="a" style="left:48px;top:398px;width:21px;height:1px;background:repeating-linear-gradient(90deg,#a0a0a0 0 1px,transparent 1px 2px);"></div>
<div class="t" style="left:72px;top:390px;font-family:'Liberation Serif',serif;font-size:17.5px;color:#000;"><span style="display:inline-block;width:9.3px;text-align:center"><span style="display:inline-block;transform:scaleX(0.771)">R</span></span><span style="display:inline-block;width:9.3px;text-align:center">9</span></div>
<div class="t" style="left:185px;top:390px;font-family:'Liberation Serif',serif;font-size:17.5px;color:#000;"><span style="display:inline-block;width:9.3px;text-align:center">0</span><span style="display:inline-block;width:9.3px;text-align:center">x</span><span style="display:inline-block;width:9.3px;text-align:center">0</span><span style="display:inline-block;width:9.3px;text-align:center">0</span><span style="display:inline-block;width:9.3px;text-align:center">0</span><span style="display:inline-block;width:9.3px;text-align:center">0</span><span style="display:inline-block;width:9.3px;text-align:center">0</span><span style="display:inline-block;width:9.3px;text-align:center">0</span><span style="display:inline-block;width:9.3px;text-align:center">0</span><span style="display:inline-block;width:9.3px;text-align:center">0</span></div>
<div class="a" style="left:69px;top:409px;width:246px;height:21px;background:#0078d7;"></div>
<div class="a" style="left:48px;top:419px;width:21px;height:1px;background:repeating-linear-gradient(90deg,#a0a0a0 0 1px,transparent 1px 2px);"></div>
<div class="t" style="left:72px;top:411px;font-family:'Liberation Serif',serif;font-size:17.5px;color:#fff;"><span style="display:inline-block;width:9.3px;text-align:center"><span style="display:inline-block;transform:scaleX(0.771)">R</span></span><span style="display:inline-block;width:9.3px;text-align:center">1</span><span style="display:inline-block;width:9.3px;text-align:center">0</span></div>
<div class="t" style="left:185px;top:411px;font-family:'Liberation Serif',serif;font-size:17.5px;color:#fff;"><span style="display:inline-block;width:9.3px;text-align:center">0</span><span style="display:inline-block;width:9.3px;text-align:center">x</span><span style="display:inline-block;width:9.3px;text-align:center">0</span><span style="display:inline-block;width:9.3px;text-align:center">8</span><span style="display:inline-block;width:9.3px;text-align:center">0</span><span style="display:inline-block;width:9.3px;text-align:center">0</span><span style="display:inline-block;width:9.3px;text-align:center">3</span><span style="display:inline-block;width:9.3px;text-align:center">9</span><span style="display:inline-block;width:9.3px;text-align:center">5</span><span style="display:inline-block;width:9.3px;text-align:center">0</span></div>
<div class="a" style="left:48px;top:440px;width:21px;height:1px;background:repeating-linear-gradient(90deg,#a0a0a0 0 1px,transparent 1px 2px);"></div>
<div class="t" style="left:72px;top:432px;font-family:'Liberation Serif',serif;font-size:17.5px;color:#000;"><span style="display:inline-block;width:9.3px;text-align:center"><span style="display:inline-block;transform:scaleX(0.771)">R</span></span><span style="display:inline-block;width:9.3px;text-align:center">1</span><span style="display:inline-block;width:9.3px;text-align:center">1</span></div>
<div class="t" style="left:185px;top:432px;font-family:'Liberation Serif',serif;font-size:17.5px;color:#000;"><span style="display:inline-block;width:9.3px;text-align:center">0</span><span style="display:inline-block;width:9.3px;text-align:center">x</span><span style="display:inline-block;width:9.3px;text-align:center">0</span><span style="display:inline-block;width:9.3px;text-align:center">0</span><span style="display:inline-block;width:9.3px;text-align:center">0</span><span style="display:inline-block;width:9.3px;text-align:center">0</span><span style="display:inline-block;width:9.3px;text-align:center">0</span><span style="display:inline-block;width:9.3px;text-align:center">0</span><span style="display:inline-block;width:9.3px;text-align:center">0</span><span style="display:inline-block;width:9.3px;text-align:center">0</span></div>
<div class="a" style="left:69px;top:451px;width:246px;height:21px;background:#0078d7;"></div>
<div class="a" style="left:48px;top:461px;width:21px;height:1px;background:repeating-linear-gradient(90deg,#a0a0a0 0 1px,transparent 1px 2px);"></div>
<div class="t" style="left:72px;top:453px;font-family:'Liberation Serif',serif;font-size:17.5px;color:#fff;"><span style="display:inline-block;width:9.3px;text-align:center"><span style="display:inline-block;transform:scaleX(0.771)">R</span></span><span style="display:inline-block;width:9.3px;text-align:center">1</span><span style="display:inline-block;width:9.3px;text-align:center">2</span></div>
<div class="t" style="left:185px;top:453px;font-family:'Liberation Serif',serif;font-size:17.5px;color:#fff;"><span style="display:inline-block;width:9.3px;text-align:center">0</span><span style="display:inline-block;width:9.3px;text-align:center">x</span><span style="display:inline-block;width:9.3px;text-align:center">0</span><span style="display:inline-block;width:9.3px;text-align:center">8</span><span style="display:inline-block;width:9.3px;text-align:center">0</span><span style="display:inline-block;width:9.3px;text-align:center">0</span><span style="display:inline-block;width:9.3px;text-align:center">2</span><span style="display:inline-block;width:9.3px;text-align:center"><span style="display:inline-block;transform:scaleX(0.842)">E</span></span><span style="display:inline-block;width:9.3px;text-align:center"><span style="display:inline-block;transform:scaleX(0.925)">F</span></span><span style="display:inline-block;width:9.3px;text-align:center"><span style="display:inline-block;transform:scaleX(0.712)">D</span></span></div>
<div class="a" style="left:69px;top:472px;width:246px;height:21px;background:#0078d7;"></div>
<div class="a" style="left:48px;top:482px;width:21px;height:1px;background:repeating-linear-gradient(90deg,#a0a0a0 0 1px,transparent 1px 2px);"></div>
<div class="t" style="left:72px;top:474px;font-family:'Liberation Serif',serif;font-size:17.5px;color:#fff;"><span style="display:inline-block;width:9.3px;text-align:center"><span style="display:inline-block;transform:scaleX(0.771)">R</span></span><span style="display:inline-block;width:9.3px;text-align:center">1</span><span style="display:inline-block;width:9.3px;text-align:center">3</span><span style="display:inline-block;width:9.3px"></span><span style="display:inline-block;width:9.3px;text-align:center">(</span><span style="display:inline-block;width:9.3px;text-align:center"><span style="display:inline-block;transform:scaleX(0.925)">S</span></span><span style="display:inline-block;width:9.3px;text-align:center"><span style="display:inline-block;transform:scaleX(0.925)">P</span></span><span style="display:inline-block;width:9.3px;text-align:center">)</span></div>
<div class="t" style="left:185px;top:474px;font-family:'Liberation Serif',serif;font-size:17.5px;color:#fff;"><span style="display:inline-block;width:9.3px;text-align:center">0</span><span style="display:inline-block;width:9.3px;text-align:center">x</span><span style="display:inline-block;width:9.3px;text-align:center">2</span><span style="display:inline-block;width:9.3px;text-align:center">0</span><span style="display:inline-block;width:9.3px;text-align:center">0</span><span style="display:inline-block;width:9.3px;text-align:center">1</span><span style="display:inline-block;width:9.3px;text-align:center">9</span><span style="display:inline-block;width:9.3px;text-align:center">1</span><span style="display:inline-block;width:9.3px;text-align:center">4</span><span style="display:inline-block;width:9.3px;text-align:center">8</span></div>
<div class="a" style="left:69px;top:493px;width:246px;height:21px;background:#0078d7;"></div>
<div class="a" style="left:48px;top:503px;width:21px;height:1px;background:repeating-linear-gradient(90deg,#a0a0a0 0 1px,transparent 1px 2px);"></div>
<div class="t" style="left:72px;top:495px;font-family:'Liberation Serif',serif;font-size:17.5px;color:#fff;"><span style="display:inline-block;width:9.3px;text-align:center"><span style="display:inline-block;transform:scaleX(0.771)">R</span></span><span style="display:inline-block;width:9.3px;text-align:center">1</span><span style="display:inline-block;width:9.3px;text-align:center">4</span><span style="display:inline-block;width:9.3px"></span><span style="display:inline-block;width:9.3px;text-align:center">(</span><span style="display:inline-block;width:9.3px;text-align:center"><span style="display:inline-block;transform:scaleX(0.842)">L</span></span><span style="display:inline-block;width:9.3px;text-align:center"><span style="display:inline-block;transform:scaleX(0.771)">R</span></span><span style="display:inline-block;width:9.3px;text-align:center">)</span></div>
<div class="t" style="left:185px;top:495px;font-family:'Liberation Serif',serif;font-size:17.5px;color:#fff;"><span style="display:inline-block;width:9.3px;text-align:center">0</span><span style="display:inline-block;width:9.3px;text-align:center">x</span><span style="display:inline-block;width:9.3px;text-align:center">0</span><span style="display:inline-block;width:9.3px;text-align:center">8</span><span style="display:inline-block;width:9.3px;text-align:center">0</span><span style="display:inline-block;width:9.3px;text-align:center">0</span><span style="display:inline-block;width:9.3px;text-align:center">0</span><span style="display:inline-block;width:9.3px;text-align:center">2</span><span style="display:inline-block;width:9.3px;text-align:center">5</span><span style="display:inline-block;width:9.3px;text-align:center"><span style="display:inline-block;transform:scaleX(0.925)">F</span></span></div>
<div class="a" style="left:69px;top:514px;width:246px;height:21px;background:#0078d7;"></div>
<div class="a" style="left:48px;top:524px;width:21px;height:1px;background:repeating-linear-gradient(90deg,#a0a0a0 0 1px,transparent 1px 2px);"></div>
<div class="t" style="left:72px;top:516px;font-family:'Liberation Serif',serif;font-size:17.5px;color:#fff;"><span style="display:inline-block;width:9.3px;text-align:center"><span style="display:inline-block;transform:scaleX(0.771)">R</span></span><span style="display:inline-block;width:9.3px;text-align:center">1</span><span style="display:inline-block;width:9.3px;text-align:center">5</span><span style="display:inline-block;width:9.3px"></span><span style="display:inline-block;width:9.3px;text-align:center">(</span><span style="display:inline-block;width:9.3px;text-align:center"><span style="display:inline-block;transform:scaleX(0.925)">P</span></span><span style="display:inline-block;width:9.3px;text-align:center"><span style="display:inline-block;transform:scaleX(0.771)">C</span></span><span style="display:inline-block;width:9.3px;text-align:center">)</span></div>
<div class="t" style="left:185px;top:516px;font-family:'Liberation Serif',serif;font-size:17.5px;color:#fff;"><span style="display:inline-block;width:9.3px;text-align:center">0</span><span style="display:inline-block;width:9.3px;text-align:center">x</span><span style="display:inline-block;width:9.3px;text-align:center">0</span><span style="display:inline-block;width:9.3px;text-align:center">8</span><span style="display:inline-block;width:9.3px;text-align:center">0</span><span style="display:inline-block;width:9.3px;text-align:center">0</span><span style="display:inline-block;width:9.3px;text-align:center">2</span><span style="display:inline-block;width:9.3px;text-align:center">0</span><span style="display:inline-block;width:9.3px;text-align:center"><span style="display:inline-block;transform:scaleX(0.842)">E</span></span><span style="display:inline-block;width:9.3px;text-align:center">0</span></div>
<div class="a" style="left:69px;top:535px;width:246px;height:21px;background:#0078d7;"></div>
<div class="a" style="left:48px;top:545px;width:21px;height:1px;background:repeating-linear-gradient(90deg,#a0a0a0 0 1px,transparent 1px 2px);"></div>
<div class="t" style="left:72px;top:537px;font-family:'Liberation Serif',serif;font-size:17.5px;color:#fff;"><span style="display:inline-block;width:9.3px;text-align:center">x</span><span style="display:inline-block;width:9.3px;text-align:center"><span style="display:inline-block;transform:scaleX(0.925)">P</span></span><span style="display:inline-block;width:9.3px;text-align:center"><span style="display:inline-block;transform:scaleX(0.925)">S</span></span><span style="display:inline-block;width:9.3px;text-align:center"><span style="display:inline-block;transform:scaleX(0.771)">R</span></span></div>
<div class="t" style="left:185px;top:537px;font-family:'Liberation Serif',serif;font-size:17.5px;color:#fff;"><span style="display:inline-block;width:9.3px;text-align:center">0</span><span style="display:inline-block;width:9.3px;text-align:center">x</span><span style="display:inline-block;width:9.3px;text-align:center">2</span><span style="display:inline-block;width:9.3px;text-align:center">1</span><span style="display:inline-block;width:9.3px;text-align:center">0</span><span style="display:inline-block;width:9.3px;text-align:center">0</span><span style="display:inline-block;width:9.3px;text-align:center">0</span><span style="display:inline-block;width:9.3px;text-align:center">0</span><span style="display:inline-block;width:9.3px;text-align:center">0</span><span style="display:inline-block;width:9.3px;text-align:center">0</span></div>
<div class="a" style="left:25px;top:566px;width:16px;height:1px;background:repeating-linear-gradient(90deg,#a0a0a0 0 1px,transparent 1px 2px);"></div>
<div class="t" style="left:42px;top:558px;font-family:'Liberation Serif',serif;font-size:17.5px;color:#000;"><span style="display:inline-block;width:9.3px;text-align:center"><span style="display:inline-block;transform:scaleX(0.771)">B</span></span><span style="display:inline-block;width:9.3px;text-align:center">a</span><span style="display:inline-block;width:9.3px;text-align:center">n</span><span style="display:inline-block;width:9.3px;text-align:center">k</span><span style="display:inline-block;width:9.3px;text-align:center">e</span><span style="display:inline-block;width:9.3px;text-align:center">d</span></div>
<div class="a" style="left:25px;top:587px;width:16px;height:1px;background:repeating-linear-gradient(90deg,#a0a0a0 0 1px,transparent 1px 2px);"></div>
<div class="t" style="left:42px;top:579px;font-family:'Liberation Serif',serif;font-size:17.5px;color:#000;"><span style="display:inline-block;width:9.3px;text-align:center"><span style="display:inline-block;transform:scaleX(0.925)">S</span></span><span style="display:inline-block;width:9.3px;text-align:center">y</span><span style="display:inline-block;width:9.3px;text-align:center">s</span><span style="display:inline-block;width:9.3px;text-align:center">t</span><span style="display:inline-block;width:9.3px;text-align:center">e</span><span style="display:inline-block;width:9.3px;text-align:center"><span style="display:inline-block;transform:scaleX(0.661)">m</span></span></div>
<div class="a" style="left:25px;top:608px;width:16px;height:1px;background:repeating-linear-gradient(90deg,#a0a0a0 0 1px,transparent 1px 2px);"></div>
<div class="t" style="left:42px;top:600px;font-family:'Liberation Serif',serif;font-size:17.5px;color:#000;"><span style="display:inline-block;width:9.3px;text-align:center">I</span><span style="display:inline-block;width:9.3px;text-align:center">n</span><span style="display:inline-block;width:9.3px;text-align:center">t</span><span style="display:inline-block;width:9.3px;text-align:center">e</span><span style="display:inline-block;width:9.3px;text-align:center">r</span><span style="display:inline-block;width:9.3px;text-align:center">n</span><span style="display:inline-block;width:9.3px;text-align:center">a</span><span style="display:inline-block;width:9.3px;text-align:center">l</span></div>
<div class="a" style="left:17px;top:196px;width:1px;height:406px;background:repeating-linear-gradient(#a0a0a0 0 1px,transparent 1px 2px);"></div>
<div class="a" style="left:47px;top:199px;width:1px;height:347px;background:repeating-linear-gradient(#a0a0a0 0 1px,transparent 1px 2px);"></div>
<svg class="i" style="left:11px;top:182px" width="13" height="13" viewBox="0 0 13 13"><rect x="0.5" y="0.5" width="12" height="12" fill="#fff" stroke="#a0a0a0"/><rect x="3" y="6" width="7" height="1.4" fill="#000"/></svg>
<svg class="i" style="left:41px;top:539px" width="13" height="13" viewBox="0 0 13 13"><rect x="0.5" y="0.5" width="12" height="12" fill="#fff" stroke="#a0a0a0"/><rect x="3" y="6" width="7" height="1.4" fill="#000"/><rect x="5.8" y="3" width="1.4" height="7" fill="#000"/></svg>
<svg class="i" style="left:11px;top:560px" width="13" height="13" viewBox="0 0 13 13"><rect x="0.5" y="0.5" width="12" height="12" fill="#fff" stroke="#a0a0a0"/><rect x="3" y="6" width="7" height="1.4" fill="#000"/><rect x="5.8" y="3" width="1.4" height="7" fill="#000"/></svg>
<svg class="i" style="left:11px;top:581px" width="13" height="13" viewBox="0 0 13 13"><rect x="0.5" y="0.5" width="12" height="12" fill="#fff" stroke="#a0a0a0"/><rect x="3" y="6" width="7" height="1.4" fill="#000"/><rect x="5.8" y="3" width="1.4" height="7" fill="#000"/></svg>
<svg class="i" style="left:11px;top:602px" width="13" height="13" viewBox="0 0 13 13"><rect x="0.5" y="0.5" width="12" height="12" fill="#fff" stroke="#a0a0a0"/><rect x="3" y="6" width="7" height="1.4" fill="#000"/></svg>
<div class="a" style="left:0px;top:617px;width:345px;height:38px;background:#f5f5f5;"></div>
<div class="a" style="left:0px;top:621px;width:345px;height:2px;background:#141414;"></div>
<div class="a" style="left:98px;top:621px;width:113px;height:33px;background:#efefef;"></div>
<div class="a" style="left:98px;top:653px;width:114px;height:2px;background:#141414;"></div>
<div class="a" style="left:210px;top:621px;width:2px;height:34px;background:#141414;"></div>
<div class="t" style="left:34px;top:630px;font-size:16.5px;color:#858585;">Project</div>
<div class="a" style="left:96px;top:628px;width:1px;height:23px;background:#c0c0c0;"></div>
<div class="t" style="left:131px;top:630px;font-size:16.5px;color:#1a1a1a;">Registers</div>
<div class="a" style="left:352px;top:110px;width:1px;height:547px;background:#a8a8a8;"></div>
<div class="a" style="left:353px;top:110px;width:567px;height:35px;background:#f5f5f5;"></div>
<div class="a" style="left:920px;top:110px;width:1px;height:547px;background:#a8a8a8;"></div>
<div class="a" style="left:353px;top:145px;width:567px;height:510px;background:#c5d5f0;"></div>
<div class="a" style="left:353px;top:655px;width:568px;height:2px;background:#b8b8b8;"></div>
<svg class="i" style="left:353px;top:110px" width="270" height="36" viewBox="0 0 270 36"><path d="M6 36 L38 4.5 L259 4.5 Q263 4.5 264 8 L264 36 Z" fill="#bfcea3"/><path d="M38 4.5 L259 4.5 Q263 4.5 264 8 L264 36" fill="none" stroke="#b4b4b4" stroke-width="1.5"/><path d="M6 35 L38 4" stroke="#fff" stroke-width="1" stroke-dasharray="1 1.5"/></svg>
<svg class="i" style="left:590px;top:110px" width="145" height="36" viewBox="0 0 145 36"><path d="M4 36 L36 4.5 L136 4.5 Q140 4.5 140.5 9 L140.5 36 Z" fill="#c5d5f0"/><path d="M36 4.5 L136 4.5 Q140 4.5 140.5 9 L140.5 35" fill="none" stroke="#b4b4b4" stroke-width="1.5"/><path d="M5 35 L36 5" stroke="#fff" stroke-width="1.2"/></svg>
<svg class="i" style="left:397px;top:119px" width="18" height="23" viewBox="0 0 18 23"><defs><linearGradient id="fg" x1="0" y1="0" x2="1" y2="1"><stop offset="0.3" stop-color="#ffffff"/><stop offset="1" stop-color="#b8c8f0"/></linearGradient><pattern id="ck" width="3" height="3" patternUnits="userSpaceOnUse"><rect width="3" height="3" fill="#fff"/><rect width="1.5" height="1.5" fill="#c8c8c8"/><rect x="1.5" y="1.5" width="1.5" height="1.5" fill="#c8c8c8"/></pattern></defs><path d="M1 1 L12 1 L17 6 L17 22 L1 22 Z" fill="url(#fg)"/><path d="M3 3 L11 11 L3 20 Z" fill="url(#ck)"/><path d="M1 22 L1 1 L12 1" fill="none" stroke="#a8b8d0" stroke-width="1.4"/><path d="M12 1 L17 6 L17 22 L1 22" fill="none" stroke="#3a4a68" stroke-width="2"/><path d="M12 1 L12 6 L17 6" fill="#6a7aa0"/></svg>
<svg class="i" style="left:632px;top:119px" width="18" height="23" viewBox="0 0 18 23"><defs><linearGradient id="fg" x1="0" y1="0" x2="1" y2="1"><stop offset="0.3" stop-color="#ffffff"/><stop offset="1" stop-color="#b8c8f0"/></linearGradient><pattern id="ck" width="3" height="3" patternUnits="userSpaceOnUse"><rect width="3" height="3" fill="#fff"/><rect width="1.5" height="1.5" fill="#c8c8c8"/><rect x="1.5" y="1.5" width="1.5" height="1.5" fill="#c8c8c8"/></pattern></defs><path d="M1 1 L12 1 L17 6 L17 22 L1 22 Z" fill="url(#fg)"/><path d="M3 3 L11 11 L3 20 Z" fill="url(#ck)"/><path d="M1 22 L1 1 L12 1" fill="none" stroke="#a8b8d0" stroke-width="1.4"/><path d="M12 1 L17 6 L17 22 L1 22" fill="none" stroke="#3a4a68" stroke-width="2"/><path d="M12 1 L12 6 L17 6" fill="#6a7aa0"/></svg>
<div class="t" style="left:431px;top:121px;font-size:16.5px;color:#101010;">startup_stm32f746xx.s</div>
<div class="t" style="left:664px;top:121px;font-size:16.5px;color:#000;font-weight:bold">main.c</div>
<div class="a" style="left:658px;top:142px;width:64px;height:3px;background:#000;"></div>
<svg class="i" style="left:866px;top:121px" width="14" height="14" viewBox="0 0 14 14"><rect x="1" y="1" width="12" height="2.6" fill="#000"/><path d="M1 5.5 L13 5.5 L7 12 Z" fill="#000"/></svg>
<svg class="i" style="left:894px;top:121px" width="16" height="14" viewBox="0 0 16 14"><path d="M2 1.5 L14 12.5 M14 1.5 L2 12.5" stroke="#000" stroke-width="2.2"/></svg>
<div class="a" style="left:357px;top:149px;width:558px;height:2px;background:#6f6f6f;"></div>
<div class="a" style="left:357px;top:149px;width:2px;height:500px;background:#6f6f6f;"></div>
<div class="a" style="left:359px;top:151px;width:94px;height:473px;background:#e8e8e8;"></div>
<div class="a" style="left:453px;top:151px;width:21px;height:473px;background:#f3f3f3;"></div>
<div class="a" style="left:474px;top:151px;width:415px;height:473px;background:#ffffff;"></div>
<div class="a" style="left:359px;top:624px;width:556px;height:27px;background:#f0f0f0;"></div>
<div class="a" style="left:889px;top:151px;width:26px;height:473px;background:#f0f0f0;"></div>
<div class="a" style="left:386px;top:635px;width:64px;height:3px;background:#6e6e6e;"></div>
<div class="a" style="left:900px;top:315px;width:3px;height:25px;background:#7c7c7c;"></div>
<div class="a" style="left:474px;top:295px;width:413px;height:24px;background:#e0fbe0;"></div>
<div class="a" style="left:476px;top:295px;width:2px;height:24px;background:#000;"></div>
<div class="a" style="left:478px;top:295px;width:10px;height:24px;background:#18fafa;"></div>
<div class="a" style="left:360px;top:295px;width:30px;height:24px;background:#c8c8c8;"></div>
<svg class="i" style="left:361px;top:295px" width="30" height="24" viewBox="0 0 30 24"><path d="M2.5 1.5 L14 12 L2.5 22.5 Z" fill="#55f5f5" stroke="#000" stroke-width="1.5"/><path d="M14 1.5 L26 12 L14 22.5 Z" fill="#ffff00" stroke="#000" stroke-width="1.5"/></svg>
<div class="a" style="left:463px;top:151px;width:2px;height:105px;background:#7a7a7a;"></div>
<div class="a" style="left:463px;top:255px;width:10px;height:2px;background:#7a7a7a;"></div>
<svg class="i" style="left:455px;top:299px" width="18" height="18" viewBox="0 0 18 18"><rect x="1" y="1" width="15" height="15" fill="#f4f4f4" stroke="#808080" stroke-width="2"/><rect x="4" y="7.6" width="9" height="1.8" fill="#808080"/></svg>
<div class="a" style="left:463px;top:316px;width:2px;height:8px;background:#7a7a7a;"></div>
<svg class="i" style="left:455px;top:323px" width="18" height="18" viewBox="0 0 18 18"><rect x="1" y="1" width="15" height="15" fill="#f4f4f4" stroke="#808080" stroke-width="2"/><rect x="4" y="7.6" width="9" height="1.8" fill="#808080"/></svg>
<div class="a" style="left:463px;top:340px;width:2px;height:272px;background:#7a7a7a;"></div>
<div class="a" style="left:463px;top:450px;width:10px;height:2px;background:#7a7a7a;"></div>
<svg class="i" style="left:455px;top:611px" width="18" height="13" viewBox="0 0 18 13"><rect x="1" y="1" width="15" height="15" fill="#f4f4f4" stroke="#808080" stroke-width="2"/><rect x="4" y="7.6" width="9" height="1.8" fill="#808080"/></svg>
<div class="a" style="left:359px;top:151px;width:530px;height:473px;overflow:hidden">
<div class="t m" style="left:0;top:4px;width:90px;text-align:right;font-size:20px">104</div>
<div class="t m" style="left:116px;top:4px;font-size:20px"><span style="color:#008000">  * </span><span style="color:#a0522d">@brief</span><span style="color:#008000">  Main program</span></div>
<div class="t m" style="left:0;top:28px;width:90px;text-align:right;font-size:20px">105</div>
<div class="t m" style="left:116px;top:28px;font-size:20px"><span style="color:#008000">  * </span><span style="color:#a0522d">@param</span><span style="color:#008000">  None</span></div>
<div class="t m" style="left:0;top:52px;width:90px;text-align:right;font-size:20px">106</div>
<div class="t m" style="left:116px;top:52px;font-size:20px"><span style="color:#008000">  * </span><span style="color:#a0522d">@retval</span><span style="color:#008000"> None</span></div>
<div class="t m" style="left:0;top:76px;width:90px;text-align:right;font-size:20px">107</div>
<div class="t m" style="left:116px;top:76px;font-size:20px"><span style="color:#008000">  */</span></div>
<div class="t m" style="left:0;top:100px;width:90px;text-align:right;font-size:20px">108</div>
<div class="t m" style="left:0;top:124px;width:90px;text-align:right;font-size:20px">109</div>
<div class="t m" style="left:116px;top:124px;font-size:20px"><span style="color:#0000ff">int</span><span style="color:#000"> main(</span><span style="color:#0000ff">void</span><span style="color:#000">)</span></div>
<div class="t m" style="left:0;top:148px;width:90px;text-align:right;font-size:20px">110</div>
<div class="t m" style="left:116px;top:148px;font-size:20px"><span style="color:#000"> </span></div>
<div class="t m" style="left:0;top:172px;width:90px;text-align:right;font-size:20px">111</div>
<div class="t m" style="left:116px;top:172px;font-size:20px"><span style="color:#008000">  /* This project template calls firstly two functions in order</span></div>
<div class="t m" style="left:0;top:196px;width:90px;text-align:right;font-size:20px">112</div>
<div class="t m" style="left:116px;top:196px;font-size:20px"><span style="color:#008000">     and to enable the CPU Cache, respectively MPU_Config()</span></div>
<div class="t m" style="left:0;top:220px;width:90px;text-align:right;font-size:20px">113</div>
<div class="t m" style="left:116px;top:220px;font-size:20px"><span style="color:#008000">     These functions are provided as template implementation</span></div>
<div class="t m" style="left:0;top:244px;width:90px;text-align:right;font-size:20px">114</div>
<div class="t m" style="left:116px;top:244px;font-size:20px"><span style="color:#008000">     in his application, to enhance the performance</span></div>
<div class="t m" style="left:0;top:268px;width:90px;text-align:right;font-size:20px">115</div>
<div class="t m" style="left:116px;top:268px;font-size:20px"><span style="color:#008000">     with several masters. */</span></div>
<div class="t m" style="left:0;top:292px;width:90px;text-align:right;font-size:20px">116</div>
<div class="t m" style="left:0;top:316px;width:90px;text-align:right;font-size:20px">117</div>
<div class="t m" style="left:116px;top:316px;font-size:20px"><span style="color:#008000">  /* Configure the MPU attributes as Device memory</span></div>
<div class="t m" style="left:0;top:340px;width:90px;text-align:right;font-size:20px">118</div>
<div class="t m" style="left:116px;top:340px;font-size:20px"><span style="color:#000">  MPU_Config();</span></div>
<div class="t m" style="left:0;top:364px;width:90px;text-align:right;font-size:20px">119</div>
<div class="t m" style="left:0;top:388px;width:90px;text-align:right;font-size:20px">120</div>
<div class="t m" style="left:116px;top:388px;font-size:20px"><span style="color:#008000">  /* Enable the CPU Cache */</span></div>
<div class="t m" style="left:0;top:412px;width:90px;text-align:right;font-size:20px">121</div>
<div class="t m" style="left:116px;top:412px;font-size:20px"><span style="color:#000">  CPU_CACHE_Enable();</span></div>
<div class="t m" style="left:0;top:436px;width:90px;text-align:right;font-size:20px">122</div>
<div class="t m" style="left:0;top:460px;width:90px;text-align:right;font-size:20px">123</div>
<div class="t m" style="left:116px;top:460px;font-size:20px"><span style="color:#008000">  /* STM32F7xx HAL library initialization:</span></div>
<div class="t m" style="left:118px;top:148px;font-size:20px;color:#000">{</div>
</div>
<div class="hdr" style="left:927px;top:110px;width:988px;height:27px"><div class="t" style="left:6px">Event Recorder</div></div>
<svg class="i" style="left:1869px;top:119px" width="11" height="13" viewBox="0 0 11 13"><path d="M2.5 0.5 L8.5 0.5 L8.5 8.5 L2.5 8.5 Z" fill="none" stroke="#000" stroke-width="1.6"/><rect x="6.5" y="0.5" width="2.5" height="8.5" fill="#000"/><rect x="0" y="8" width="11" height="2" fill="#000"/><rect x="5" y="10" width="1.6" height="3" fill="#000"/></svg>
<svg class="i" style="left:1893px;top:117px" width="18" height="18" viewBox="0 0 18 18"><rect width="18" height="18" fill="#c94c4c"/><path d="M5 5 L13 13 M13 5 L5 13" stroke="#fff" stroke-width="2.2"/></svg>
<div class="a" style="left:927px;top:141px;width:988px;height:1px;background:#ababab;"></div>
<div class="a" style="left:927px;top:141px;width:1px;height:480px;background:#ababab;"></div>
<div class="a" style="left:929px;top:142px;width:986px;height:3px;background:#f0f0f0;"></div>
<div class="a" style="left:929px;top:142px;width:3px;height:476px;background:#f0f0f0;"></div>
<div class="a" style="left:932px;top:145px;width:983px;height:472px;background:#ffffff;"></div>
<div class="t" style="left:942px;top:156px;font-size:16.5px;color:#1a1a1a;">Enable</div>
<svg class="i" style="left:1025px;top:152px" width="23" height="23" viewBox="0 0 23 23"><rect x="0" y="0" width="22" height="22" fill="#e6e6e6"/><rect x="2" y="2" width="19" height="19" fill="#fff"/><rect x="0" y="0" width="22" height="2" fill="#7d7d7d"/><rect x="0" y="0" width="2" height="22" fill="#7d7d7d"/><path d="M6 11 L10 15.5 L17 6" fill="none" stroke="#000" stroke-width="3"/></svg>
<svg class="i" style="left:1066px;top:153px" width="25" height="23" viewBox="0 0 25 23"><rect x="1" y="1" width="20" height="19" fill="#eef2f8" stroke="#3c64b4" stroke-width="1.6"/><rect x="1" y="1" width="20" height="3.5" fill="#4a7ad0"/><path d="M4 9h8M4 12h8M4 15h8" stroke="#777" stroke-width="1.3"/><path d="M8 8 L22 21 M22 8 L8 21" stroke="#d01818" stroke-width="4"/></svg>
<svg class="i" style="left:1111px;top:154px" width="22" height="22" viewBox="0 0 22 22"><rect x="0.5" y="0.5" width="21" height="20" fill="#b8b8f0" stroke="#a0a0e0"/><rect x="4" y="2" width="13" height="8" fill="#f2f4fc"/><rect x="6" y="13" width="9" height="6" fill="#e0e0f0"/></svg>
<svg class="i" style="left:1155px;top:156px" width="22" height="19" viewBox="0 0 22 19"><path d="M1 1 L20 1 L12.5 9 L12.5 17 L8.5 17 L8.5 9 Z" fill="#8a8a8a"/><path d="M3 2 L18 2 L11.5 8.5 L9.5 8.5 Z" fill="#555"/><path d="M9 9 L12 9 L12 17 L9 17 Z" fill="#222"/></svg>
<div class="t" style="left:1190px;top:156px;font-size:16.5px;color:#1a1a1a;letter-spacing:0.6px">Mark:</div>
<svg class="i" style="left:1458px;top:154px" width="21" height="26" viewBox="0 0 21 26"><rect x="0.5" y="0.5" width="20" height="25" rx="2" fill="#fff" stroke="#d0d0d0"/><path d="M5 12 L10.5 17 L16 12" fill="none" stroke="#606060" stroke-width="1.3"/></svg>
<div class="a" style="left:1489px;top:155px;width:137px;height:23px;background:#efefef;"></div>
<div class="t" style="left:1494px;top:158px;font-size:16.5px;color:#1a1a1a;letter-spacing:0.5px">All Operations</div>
<svg class="i" style="left:1628px;top:154px" width="21" height="26" viewBox="0 0 21 26"><rect x="0.5" y="0.5" width="20" height="25" rx="2" fill="#fff" stroke="#d0d0d0"/><path d="M5 12 L10.5 17 L16 12" fill="none" stroke="#606060" stroke-width="1.3"/></svg>
<div class="t" style="left:1657px;top:156px;font-size:16.5px;color:#1a1a1a;letter-spacing:1px">Stopped</div>
<div class="a" style="left:932px;top:184px;width:983px;height:2px;background:#c8c8c8;"></div>
<div class="a" style="left:1020px;top:186px;width:1px;height:34px;background:#e6e6e6;"></div>
<div class="a" style="left:1156px;top:186px;width:1px;height:34px;background:#e6e6e6;"></div>
<div class="a" style="left:1276px;top:186px;width:1px;height:34px;background:#e6e6e6;"></div>
<div class="a" style="left:1500px;top:186px;width:1px;height:34px;background:#e6e6e6;"></div>
<div class="t" style="left:939px;top:195px;font-size:16.5px;color:#1a1a1a;letter-spacing:0.4px">Event</div>
<div class="t" style="left:1030px;top:195px;font-size:16.5px;color:#1a1a1a;letter-spacing:0.5px">Time (sec)</div>
<div class="t" style="left:1164px;top:195px;font-size:16.5px;color:#1a1a1a;letter-spacing:1.2px">Component</div>
<div class="t" style="left:1284px;top:195px;font-size:16.5px;color:#1a1a1a;letter-spacing:0.5px">Event Property</div>
<div class="t" style="left:1509px;top:195px;font-size:16.5px;color:#1a1a1a;letter-spacing:0.4px">Value</div>
<div class="a" style="left:932px;top:220px;width:980px;height:2px;background:#c8c8c8;"></div>
<div class="a" style="left:932px;top:250px;width:980px;height:2px;background:#c8c8c8;"></div>
<div class="a" style="left:932px;top:280px;width:980px;height:2px;background:#c8c8c8;"></div>
<div class="a" style="left:932px;top:310px;width:980px;height:2px;background:#c8c8c8;"></div>
<div class="a" style="left:932px;top:340px;width:980px;height:2px;background:#c8c8c8;"></div>
<div class="a" style="left:932px;top:370px;width:980px;height:2px;background:#c8c8c8;"></div>
<div class="a" style="left:932px;top:400px;width:980px;height:2px;background:#c8c8c8;"></div>
<div class="a" style="left:932px;top:430px;width:980px;height:2px;background:#c8c8c8;"></div>
<div class="a" style="left:932px;top:460px;width:980px;height:2px;background:#c8c8c8;"></div>
<div class="a" style="left:932px;top:490px;width:980px;height:2px;background:#c8c8c8;"></div>
<div class="a" style="left:932px;top:520px;width:980px;height:2px;background:#c8c8c8;"></div>
<div class="a" style="left:932px;top:550px;width:980px;height:2px;background:#c8c8c8;"></div>
<div class="a" style="left:932px;top:580px;width:980px;height:2px;background:#c8c8c8;"></div>
<div class="a" style="left:1021px;top:222px;width:2px;height:371px;background:#c8c8c8;"></div>
<div class="a" style="left:1156px;top:222px;width:2px;height:371px;background:#c8c8c8;"></div>
<div class="a" style="left:1276px;top:222px;width:2px;height:371px;background:#c8c8c8;"></div>
<div class="a" style="left:1500px;top:222px;width:2px;height:371px;background:#c8c8c8;"></div>
<div class="a" style="left:1912px;top:186px;width:3px;height:407px;background:#f0f0f0;"></div>
<div class="a" style="left:932px;top:593px;width:980px;height:26px;background:#f0f0f0;"></div>
<div class="a" style="left:932px;top:593px;width:25px;height:26px;background:#efefef;border-top:1px solid #fff;border-left:1px solid #fff;border-right:2px solid #7a7a7a;border-bottom:2px solid #7a7a7a"></div>
<svg class="i" style="left:939px;top:598px" width="12" height="14" viewBox="0 0 12 14"><path d="M9 2 L3 7 L9 12 Z" fill="#000"/></svg>
<div class="a" style="left:957px;top:593px;width:892px;height:26px;background:#efefef;border-top:1px solid #fff;border-left:1px solid #fff;border-right:2px solid #7a7a7a;border-bottom:2px solid #7a7a7a"></div>
<div class="a" style="left:1849px;top:593px;width:37px;height:26px;background:repeating-conic-gradient(#e8e8e8 0 25%,#f8f8f8 0 50%) 0 0/2px 2px;"></div>
<div class="a" style="left:1886px;top:593px;width:26px;height:26px;background:#efefef;border-top:1px solid #fff;border-left:1px solid #fff;border-right:2px solid #7a7a7a;border-bottom:2px solid #7a7a7a"></div>
<svg class="i" style="left:1893px;top:598px" width="12" height="14" viewBox="0 0 12 14"><path d="M3 2 L9 7 L3 12 Z" fill="#000"/></svg>
<div class="a" style="left:927px;top:619px;width:988px;height:37px;background:#f5f5f5;"></div>
<div class="a" style="left:1090px;top:621px;width:825px;height:2px;background:#141414;"></div>
<div class="a" style="left:932px;top:621px;width:158px;height:33px;background:#efefef;"></div>
<div class="a" style="left:932px;top:653px;width:159px;height:2px;background:#141414;"></div>
<div class="a" style="left:1089px;top:621px;width:2px;height:34px;background:#141414;"></div>
<div class="t" style="left:963px;top:630px;font-size:16.5px;color:#1a1a1a;">Event Recorder</div>
<div class="t" style="left:1124px;top:630px;font-size:16.5px;color:#858585;">System Analyzer</div>
<div class="a" style="left:1260px;top:628px;width:1px;height:23px;background:#c0c0c0;"></div>
<div class="t" style="left:1295px;top:630px;font-size:16.5px;color:#858585;">Logic Analyzer</div>
<div class="a" style="left:1418px;top:628px;width:1px;height:23px;background:#c0c0c0;"></div>
<div class="t" style="left:1452px;top:630px;font-size:16.5px;color:#858585;">Disassembly</div>
<div class="a" style="left:1557px;top:628px;width:1px;height:23px;background:#c0c0c0;"></div>
<div class="hdr" style="left:0;top:663px;width:957px;height:27px"><div class="t" style="top:7px">Command</div></div>
<svg class="i" style="left:909px;top:671px" width="11" height="13" viewBox="0 0 11 13"><path d="M2.5 0.5 L8.5 0.5 L8.5 8.5 L2.5 8.5 Z" fill="none" stroke="#000" stroke-width="1.6"/><rect x="6.5" y="0.5" width="2.5" height="8.5" fill="#000"/><rect x="0" y="8" width="11" height="2" fill="#000"/><rect x="5" y="10" width="1.6" height="3" fill="#000"/></svg>
<svg class="i" style="left:933px;top:669px" width="18" height="18" viewBox="0 0 18 18"><rect width="18" height="18" fill="#c94c4c"/><path d="M5 5 L13 13 M13 5 L5 13" stroke="#fff" stroke-width="2.2"/></svg>
<div class="a" style="left:956px;top:663px;width:1px;height:275px;background:#ffffff;"></div>
<div class="a" style="left:0px;top:694px;width:955px;height:1px;background:#6a6a6a;"></div>
<div class="a" style="left:0px;top:695px;width:955px;height:1px;background:#a8a8a8;"></div>
<div class="a" style="left:0px;top:694px;width:1px;height:180px;background:#d8d8d8;"></div>
<div class="a" style="left:2px;top:696px;width:928px;height:147px;background:#ffffff;"></div>
<div class="a" style="left:930px;top:696px;width:25px;height:147px;background:#f0f0f0;"></div>
<svg class="i" style="left:935px;top:702px" width="16" height="12" viewBox="0 0 16 12"><path d="M2 10 L8 3 L14 10 Z" fill="#a8a8a8"/></svg>
<svg class="i" style="left:935px;top:822px" width="16" height="12" viewBox="0 0 16 12"><path d="M2 2 L8 9 L14 2 Z" fill="#a8a8a8"/></svg>
<div class="a" style="left:2px;top:843px;width:953px;height:26px;background:#f0f0f0;"></div>
<div class="a" style="left:25px;top:853px;width:660px;height:3px;background:#6e6e6e;"></div>
<div class="a" style="left:955px;top:694px;width:2px;height:181px;background:#f4f4f4;"></div>
<div class="a" style="left:0px;top:873px;width:957px;height:2px;background:#8a8a8a;"></div>
<div class="t m" style="left:3px;top:700px;font-size:20px;color:#000;">Load "E:\\MDKWorkSpace\\MDK Trainging 2023\\3-3 Event Recorder\\Objects\\STM3</div>
<div class="t m" style="left:3px;top:748px;font-size:20px;color:#000;">Warning: Event Recorder not located in uninitialized memory!</div>
<div class="a" style="left:1px;top:734px;width:744px;height:54px;background:transparent;border:2px solid #e81123"></div>
<div class="a" style="left:0px;top:875px;width:957px;height:28px;background:#ffffff;"></div>
<div class="a" style="left:0px;top:877px;width:20px;height:26px;background:#f2f2f2;"></div>
<div class="t" style="left:9px;top:881px;font-size:17px;color:#444;">&gt;</div>
<div class="a" style="left:0px;top:903px;width:957px;height:35px;background:#f0f0f0;"></div>
<div class="a" style="left:0px;top:903px;width:955px;height:1px;background:#ffffff;"></div>
<div class="a" style="left:954px;top:903px;width:2px;height:35px;background:#7a7a7a;"></div>
<div class="t m" style="left:3px;top:911px;font-size:20px;color:#000;">ASSIGN BreakDisable BreakEnable BreakKill BreakList BreakSet BreakAccess</div>
<div class="a" style="left:0px;top:937px;width:955px;height:1px;background:#a8a8a8;"></div>
<div class="hdr" style="left:963px;top:663px;width:952px;height:27px"><div class="t" style="top:7px;left:6px">Call Stack + Locals</div></div>
<svg class="i" style="left:1869px;top:671px" width="11" height="13" viewBox="0 0 11 13"><path d="M2.5 0.5 L8.5 0.5 L8.5 8.5 L2.5 8.5 Z" fill="none" stroke="#000" stroke-width="1.6"/><rect x="6.5" y="0.5" width="2.5" height="8.5" fill="#000"/><rect x="0" y="8" width="11" height="2" fill="#000"/><rect x="5" y="10" width="1.6" height="3" fill="#000"/></svg>
<svg class="i" style="left:1893px;top:669px" width="18" height="18" viewBox="0 0 18 18"><rect width="18" height="18" fill="#c94c4c"/><path d="M5 5 L13 13 M13 5 L5 13" stroke="#fff" stroke-width="2.2"/></svg>
<div class="a" style="left:963px;top:693px;width:952px;height:1px;background:#b0b0b0;"></div>
<div class="a" style="left:963px;top:693px;width:2px;height:209px;background:#a8a8a8;"></div>
<div class="a" style="left:965px;top:694px;width:950px;height:208px;background:#ffffff;"></div>
<div class="t" style="left:975px;top:707px;font-size:16.5px;color:#1a1a1a;letter-spacing:1.5px">Name</div>
<div class="t" style="left:1275px;top:707px;font-size:16.5px;color:#1a1a1a;letter-spacing:0.9px">Location/Value</div>
<div class="t" style="left:1475px;top:707px;font-size:16.5px;color:#1a1a1a;letter-spacing:0.5px">Type</div>
<div class="a" style="left:1266px;top:697px;width:1px;height:35px;background:#e6e6e6;"></div>
<div class="a" style="left:1466px;top:697px;width:1px;height:35px;background:#e6e6e6;"></div>
<div class="a" style="left:1665px;top:697px;width:1px;height:35px;background:#e6e6e6;"></div>
<div class="a" style="left:967px;top:731px;width:945px;height:2px;background:#c8c8c8;"></div>
<div class="a" style="left:1027px;top:733px;width:239px;height:29px;background:#efefef;"></div>
<div class="a" style="left:1267px;top:733px;width:398px;height:29px;background:#efefef;"></div>
<div class="a" style="left:1266px;top:733px;width:1px;height:30px;background:#c8c8c8;"></div>
<div class="a" style="left:1466px;top:733px;width:1px;height:30px;background:#c8c8c8;"></div>
<div class="a" style="left:1665px;top:733px;width:1px;height:30px;background:#c8c8c8;"></div>
<div class="a" style="left:1266px;top:762px;width:400px;height:1px;background:#c8c8c8;"></div>
<div class="a" style="left:982px;top:747px;width:20px;height:1px;background:repeating-linear-gradient(90deg,#a0a0a0 0 1px,transparent 1px 2px);"></div>
<svg class="i" style="left:1007px;top:734px" width="16" height="20" viewBox="0 0 16 20"><path d="M8 1 L15 6 L15 14 L8 19 L1 14 L1 6 Z" fill="#c040c0"/><path d="M8 1 L15 6 L8 10 L1 6 Z" fill="#e890e8"/><path d="M8 10 L15 6 L15 14 L8 19 Z" fill="#9a2a9a"/></svg>
<div class="t" style="left:1033px;top:738px;font-size:16.5px;color:#1a1a1a;letter-spacing:1.2px">main</div>
<div class="t" style="left:1272px;top:738px;font-size:16.5px;color:#1a1a1a;">0x080020E0</div>
<div class="t" style="left:1471px;top:738px;font-size:16.5px;color:#1a1a1a;letter-spacing:1px">int f()</div>
<div class="a" style="left:963px;top:902px;width:952px;height:36px;background:#f5f5f5;"></div>
<div class="a" style="left:1151px;top:901px;width:764px;height:2px;background:#141414;"></div>
<div class="a" style="left:967px;top:902px;width:184px;height:33px;background:#efefef;"></div>
<div class="a" style="left:967px;top:934px;width:185px;height:2px;background:#141414;"></div>
<div class="a" style="left:1150px;top:902px;width:2px;height:34px;background:#141414;"></div>
<div class="t" style="left:999px;top:911px;font-size:16.5px;color:#1a1a1a;">Call Stack + Locals</div>
<div class="t" style="left:1185px;top:911px;font-size:16.5px;color:#858585;">Memory 1</div>
<div class="a" style="left:1274px;top:908px;width:1px;height:23px;background:#c0c0c0;"></div>
<div class="a" style="left:1912px;top:694px;width:3px;height:208px;background:#f0f0f0;"></div>
<div class="a" style="left:1697px;top:932px;width:218px;height:6px;background:#ffffff;border-top:1px solid #a8a8a8;border-left:1px solid #a8a8a8"></div>
<div class="a" style="left:1706px;top:936px;width:24px;height:2px;background:#e07050;"></div>
<div class="a" style="left:963px;top:937px;width:734px;height:1px;background:#e8e8e8;"></div>
<svg class="i" style="left:8px;top:627px" width="21" height="20" viewBox="0 0 21 20"><rect x="0.5" y="0.5" width="20" height="19" fill="#f4f4f4" stroke="#3a5a8a"/><rect x="1" y="1" width="19" height="3" fill="#5a8ae0"/><path d="M4 7h2M4 10h2M4 13h2M4 16h2" stroke="#555" stroke-width="2"/><path d="M7 7h10M7 10h10M7 13h10M7 16h10" stroke="#d8e020" stroke-width="2"/></svg>
<svg class="i" style="left:107px;top:628px" width="20" height="18" viewBox="0 0 20 18"><rect x="0.5" y="0.5" width="19" height="4" rx="1" fill="#6a86b8" stroke="#3a5688"/><rect x="0.5" y="6.5" width="19" height="4" rx="1" fill="#6a86b8" stroke="#3a5688"/><rect x="0.5" y="12.5" width="19" height="4" rx="1" fill="#6a86b8" stroke="#3a5688"/><path d="M2 2.5h16M2 8.5h16M2 14.5h16" stroke="#d8e4f4" stroke-width="1" stroke-dasharray="2 1.5"/></svg>
<svg class="i" style="left:937px;top:625px" width="24" height="26" viewBox="0 0 24 26"><path d="M5 1 L5 20" stroke="#1a6ad8" stroke-width="2.4"/><path d="M0.5 15 L5 22 L9.5 15 Z" fill="#1a6ad8"/><rect x="12" y="3" width="11" height="4" fill="#8aa0c8" stroke="#4a6090"/><rect x="12" y="9" width="11" height="4" fill="#8aa0c8" stroke="#4a6090"/><rect x="12" y="15" width="11" height="4" fill="#8aa0c8" stroke="#4a6090"/><rect x="0" y="23" width="24" height="2" fill="#222"/></svg>
<svg class="i" style="left:1096px;top:625px" width="25" height="26" viewBox="0 0 25 26"><path d="M1 6 L4 2 L8 9 L12 3 L16 9 L20 1 L23 8" fill="none" stroke="#e01818" stroke-width="2.6"/><path d="M1 17 L9 17 M6 13.5 L10 17 L6 20.5" fill="none" stroke="#1a7ad8" stroke-width="2.4"/><text x="13" y="21" font-family="Liberation Sans" font-weight="bold" font-size="15" fill="#111">t</text><rect x="0" y="23" width="25" height="2" fill="#222"/></svg>
<svg class="i" style="left:1269px;top:627px" width="22" height="20" viewBox="0 0 22 20"><rect x="0.5" y="0.5" width="21" height="19" fill="#1a1a3a" stroke="#5a6a8a"/><path d="M2 9 L5 9 L5 5 L11 5 L11 9 L14 9 L14 5 L20 5" fill="none" stroke="#e82020" stroke-width="1.6"/><path d="M2 15 L5 12 L8 15 L11 12 L14 15 L17 12 L20 15" fill="none" stroke="#e8e020" stroke-width="1.4"/></svg>
<svg class="i" style="left:1425px;top:626px" width="24" height="25" viewBox="0 0 24 25"><rect x="0.5" y="0.5" width="15" height="20" fill="#eef2fa" stroke="#3a4a6a" stroke-width="1.2"/><circle cx="11" cy="11" r="6.5" fill="#e8f0fa" stroke="#3a8ad8" stroke-width="1.8"/><path d="M3 4h2M3 8h2M3 12h2M3 16h2" stroke="#333" stroke-width="1.6"/><path d="M9 9h4M9 12h4" stroke="#3a6aa8" stroke-width="1.4"/><path d="M15.5 15.5 L22 22" stroke="#555" stroke-width="2.4"/></svg>
<svg class="i" style="left:971px;top:907px" width="26" height="24" viewBox="0 0 26 24"><rect x="7" y="0.5" width="10" height="9" fill="#f0f4fa" stroke="#6a7a98"/><rect x="11" y="4.5" width="10" height="9" fill="#f0f4fa" stroke="#6a7a98"/><rect x="13" y="9.5" width="12" height="11" fill="#f0f4fa" stroke="#6a7a98"/><path d="M5 11 Q1 16 5 19 L9 19" fill="none" stroke="#3a7ae8" stroke-width="2.4"/><path d="M7 15.5 L11 19.5 L7 23 Z" fill="#3a7ae8"/></svg>
<svg class="i" style="left:1160px;top:908px" width="21" height="20" viewBox="0 0 21 20"><rect x="0.5" y="0.5" width="20" height="19" fill="#f4f6fa" stroke="#3a5a8a"/><rect x="1" y="1" width="19" height="3" fill="#5a8ae0"/><rect x="3.0" y="7.0" width="1.6" height="1.6" fill="#555"/><rect x="3.0" y="10.2" width="1.6" height="1.6" fill="#555"/><rect x="3.0" y="13.4" width="1.6" height="1.6" fill="#555"/><rect x="3.0" y="16.6" width="1.6" height="1.6" fill="#555"/><rect x="6.8" y="7.0" width="1.6" height="1.6" fill="#555"/><rect x="6.8" y="10.2" width="1.6" height="1.6" fill="#555"/><rect x="6.8" y="13.4" width="1.6" height="1.6" fill="#555"/><rect x="6.8" y="16.6" width="1.6" height="1.6" fill="#555"/><rect x="10.6" y="7.0" width="1.6" height="1.6" fill="#555"/><rect x="10.6" y="10.2" width="1.6" height="1.6" fill="#555"/><rect x="10.6" y="13.4" width="1.6" height="1.6" fill="#555"/><rect x="10.6" y="16.6" width="1.6" height="1.6" fill="#555"/><rect x="14.4" y="7.0" width="1.6" height="1.6" fill="#555"/><rect x="14.4" y="10.2" width="1.6" height="1.6" fill="#555"/><rect x="14.4" y="13.4" width="1.6" height="1.6" fill="#555"/><rect x="14.4" y="16.6" width="1.6" height="1.6" fill="#555"/></svg>
</body></html>
